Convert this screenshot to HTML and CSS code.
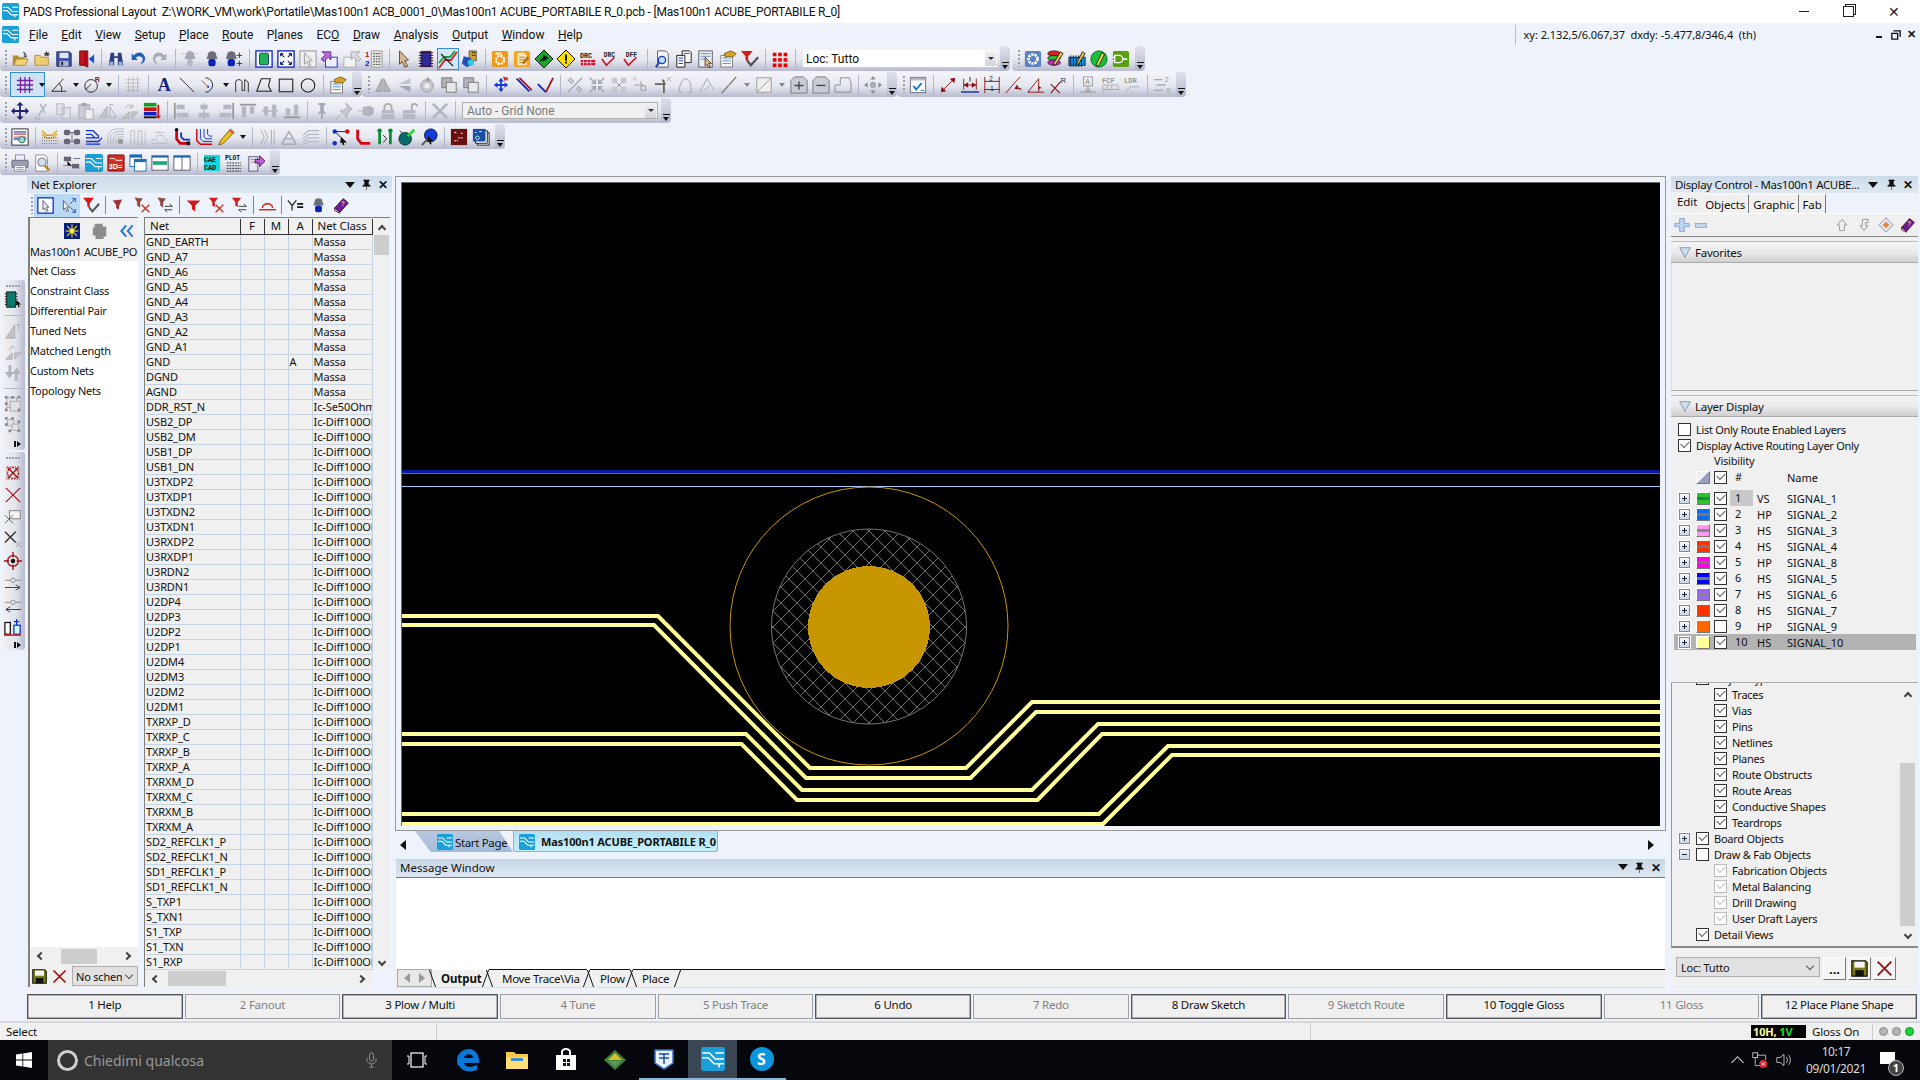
FILE: index.html
```html
<!DOCTYPE html>
<html lang="it">
<head>
<meta charset="utf-8">
<title>PADS Professional Layout</title>
<link rel="stylesheet" href="styles.css">
</head>
<body>
<svg class="sprite" xmlns="http://www.w3.org/2000/svg">
<symbol id="pads" viewBox="0 0 20 20"><rect width="20" height="20" rx="2" fill="#1a9fd8"/><path d="M1 5h6l5 5h7M1 9h5l5 5h8M12 5h7M15 14v3" stroke="#fff" stroke-width="1.3" fill="none"/></symbol>
<symbol id="open" viewBox="0 0 20 20"><path d="M2 6h6l1 2h6v3H6l-3 6H2z" fill="#b88f2c"/><path d="M6 10h13l-3 7H3z" fill="#f2d078" stroke="#9a7a2a" stroke-width=".8"/><path d="M13 2q4 0 4 5l2-1-3 3-3-3 2 1q0-3-2-5" fill="#555"/></symbol>
<symbol id="fnew" viewBox="0 0 20 20"><path d="M2 6h6l1 2h8v9H2z" fill="#f0cd72" stroke="#9a7a2a" stroke-width=".8"/><path d="M15 1l1 2 2-1-1 2 2 1-2 1 0 1-2-1-2 1 0-2-1-1 2-1z" fill="#444"/></symbol>
<symbol id="save" viewBox="0 0 20 20"><path d="M2 2h14l2 2v14H2z" fill="#3a4f9e" stroke="#222a66"/><rect x="5" y="3" width="10" height="6" fill="#dfe4f5"/><rect x="5" y="12" width="10" height="6" fill="#a9b3c8"/><rect x="7" y="13" width="2" height="4" fill="#223"/></symbol>
<symbol id="exit" viewBox="0 0 20 20"><path d="M3 1h9v18l-5-2H3z" fill="#c8121e" stroke="#5c0a10"/><path d="M9 2v15" stroke="#601" /><path d="M13 10l6-5v3h0v4l-0 3z" fill="#1a4fd0"/></symbol>
<symbol id="binoc" viewBox="0 0 20 20"><path d="M4 3h4v4h4V3h4l2 14h-6V9H8v8H2z" fill="#2b3f7c"/><path d="M3 13h4v4H3zM13 13h4v4h-4z" fill="#9bb6e6"/></symbol>
<symbol id="undo" viewBox="0 0 20 20"><path d="M3 4v7h7L7.5 8.5Q12 5 15 9q1 4-3 7 6-1 6-7-2-7-8-6-3 0-4.500 3z" fill="#2460b8"/></symbol>
<symbol id="redo" viewBox="0 0 20 20"><path d="M17 4v7h-7l2.500-2.500Q8 5 5 9q-1 4 3 7-6-1-6-7 2-7 8-6 3 0 4.500 3z" fill="#a9acb5"/></symbol>
<symbol id="lampg" viewBox="0 0 20 20"><path d="M6 3q4-3 8 0l2 7H4z" fill="#a5a8b2"/><rect x="7" y="10" width="6" height="8" rx="2" fill="#b5b8c2"/><path d="M1 4h3M16 4h3M10 0v2" stroke="#b5b8c2"/></symbol>
<symbol id="lamp" viewBox="0 0 20 20"><path d="M6 3q4-3 8 0l2 7H4z" fill="#6d6f78"/><rect x="6" y="10" width="8" height="8" rx="2.500" fill="#0b22b8"/></symbol>
<symbol id="lampp" viewBox="0 0 20 20"><path d="M3 3q4-3 8 0l2 7H1z" fill="#6d6f78"/><rect x="3" y="10" width="8" height="8" rx="2.500" fill="#0b22b8"/><path d="M16 3v6M13 6h6M16 12v6M13 15h6" stroke="#333"/></symbol>
<symbol id="gbox" viewBox="0 0 20 20"><rect x="1" y="1" width="18" height="18" fill="#fff" stroke="#1128c8" stroke-width="1.500"/><rect x="5" y="3.500" width="10" height="13" rx="1.500" fill="#1fb45a" stroke="#137"/></symbol>
<symbol id="zext" viewBox="0 0 20 20"><rect x="1" y="1" width="18" height="18" fill="#fff" stroke="#1128c8" stroke-width="1.500"/><path d="M4 4l4 4M16 4l-4 4M4 16l4-4M16 16l-4-4M4 4h3M4 4v3M16 4h-3M16 4v3M4 16h3M4 16v-3M16 16h-3M16 16v-3" stroke="#111c66" stroke-width="1.300"/></symbol>
<symbol id="curbox" viewBox="0 0 20 20"><rect x="1" y="1" width="18" height="18" fill="#f0f0f0" stroke="#a9acb5" stroke-width="1.500"/><path d="M6 3l9 9-4 0 2 5-2 1-2-5-3 3z" fill="#e7e7ea" stroke="#999"/></symbol>
<symbol id="parrow" viewBox="0 0 20 20"><rect x="5" y="8" width="13" height="11" fill="#eef" stroke="#1128c8"/><path d="M1 2h10v9l-3-3-5 5-3-3 5-5z" fill="#b56ad8" stroke="#6a2a98"/></symbol>
<symbol id="garrow" viewBox="0 0 20 20"><rect x="1" y="8" width="13" height="11" fill="#f2f2f2" stroke="#aaa"/><path d="M19 2H9v9l3-3 5 5 3-3-5-5z" fill="#d8dadf" stroke="#a8a8b0"/></symbol>
<symbol id="list12" viewBox="0 0 20 20"><text x="0" y="8" font-family="Liberation Sans" font-size="9" font-weight="700" fill="#d01010">1</text><text x="0" y="18" font-family="Liberation Sans" font-size="9" font-weight="700" fill="#1020c0">2</text><rect x="7" y="1" width="12" height="18" fill="#e8e8e8" stroke="#999"/><path d="M9 4h8M9 7h8M9 10h8M9 13h8M9 16h8" stroke="#333" stroke-dasharray="2 1"/></symbol>
<symbol id="cursor" viewBox="0 0 20 20"><path d="M5 1l10 10-4 1 3 6-3 1-3-6-3 3z" fill="#d8b890" stroke="#5a4030"/></symbol>
<symbol id="chip" viewBox="0 0 20 20"><rect x="4" y="1" width="12" height="18" fill="#2a2f8c"/><path d="M2 3h16M2 6h16M2 9h16M2 12h16M2 15h16M2 18h16" stroke="#400" stroke-width="1"/><rect x="6" y="3" width="8" height="14" fill="#2e2a9a"/></symbol>
<symbol id="route" viewBox="0 0 20 20"><path d="M1 19L7 11h6l6-8" stroke="#d02020" stroke-width="1.800" fill="none"/><path d="M1 14l5-6h6l5-6" stroke="#10a040" stroke-width="1.800" fill="none"/><path d="M3 5l12 12" stroke="#222" stroke-width="1.200"/></symbol>
<symbol id="threed" viewBox="0 0 20 20"><path d="M9 1h8v11H9z" fill="#d6a328" stroke="#555"/><path d="M3 7l8 2 3 7-8 3-5-4z" fill="#2450b8"/><circle cx="11" cy="14" r="3.500" fill="#38c8e0"/><path d="M12 3h4M12 6h4" stroke="#222"/></symbol>
<symbol id="ocog" viewBox="0 0 20 20"><rect x="1" y="1" width="18" height="18" rx="2" fill="#f09a1a"/><circle cx="10" cy="11" r="4.500" fill="none" stroke="#fff" stroke-width="2.500" stroke-dasharray="2.500 1"/><path d="M5 3h7v2H5z" fill="#fff"/></symbol>
<symbol id="odoc" viewBox="0 0 20 20"><rect x="1" y="1" width="18" height="18" rx="2" fill="#f2a424"/><path d="M5 3h7l3 3v11H5z" fill="#fde9bf"/><path d="M7 8h6M7 11h6M7 14h4" stroke="#a56b10"/><path d="M10 14l6-7 2 2-6 7z" fill="#b56a10"/></symbol>
<symbol id="gdia" viewBox="0 0 20 20"><path d="M10 0l10 10-10 10L0 10z" fill="#18a82c" stroke="#000"/><path d="M5 12l4-4V5l6 4-6 4v-3l-2 3z" fill="#111"/></symbol>
<symbol id="ydia" viewBox="0 0 20 20"><path d="M10 0l10 10-10 10L0 10z" fill="#ffe100" stroke="#000"/><rect x="9" y="5" width="2" height="7" fill="#000"/><rect x="9" y="13" width="2" height="2" fill="#000"/></symbol>
<symbol id="drc" viewBox="0 0 20 20"><text x="1" y="9" font-family="Liberation Mono" font-size="7.500" font-weight="700" fill="#222">DRC</text><path d="M2 11h16v6H2z" fill="#d01030"/><path d="M2 14h16M5 11v6M9 11v6M13 11v6" stroke="#fff" stroke-width=".7"/></symbol>
<symbol id="drcc" viewBox="0 0 20 20"><text x="3" y="8" font-family="Liberation Mono" font-size="7" font-weight="700" fill="#222">DRC</text><path d="M1 10l5 7 9-9" stroke="#d01020" stroke-width="1.800" fill="none"/></symbol>
<symbol id="dff" viewBox="0 0 20 20"><text x="3" y="8" font-family="Liberation Mono" font-size="7" font-weight="700" fill="#222">DFF</text><path d="M1 10l5 7 9-9" stroke="#d01020" stroke-width="1.800" fill="none"/></symbol>
<symbol id="docmag" viewBox="0 0 20 20"><path d="M5 1h9l3 3v15H5z" fill="#f6f6f6" stroke="#556"/><circle cx="10" cy="11" r="4" fill="#bfe0ff" stroke="#1840b0" stroke-width="1.500"/><path d="M7 14l-4 5" stroke="#1840b0" stroke-width="2"/></symbol>
<symbol id="docs" viewBox="0 0 20 20"><path d="M8 1h8l2 2v11h-10z" fill="#fff" stroke="#111"/><path d="M2 6h9v13H2z" fill="#fff" stroke="#111"/><path d="M4 9h5M4 12h5M4 15h5M10 4h6" stroke="#1030c8"/></symbol>
<symbol id="doccur" viewBox="0 0 20 20"><rect x="2" y="1" width="15" height="18" fill="#eee" stroke="#556"/><path d="M4 4h11M4 7h11M4 10h6" stroke="#5a8ac8"/><path d="M9 8l7 7-3 0 2 4-2 1-2-4-2 2z" fill="#d8b890" stroke="#5a4030"/></symbol>
<symbol id="clip" viewBox="0 0 20 20"><path d="M2 6h13v13H2z" fill="#f5f5f5" stroke="#777"/><path d="M4 9h9M4 12h9M4 15h9" stroke="#5a8ac8"/><path d="M6 4l7-3 6 3-4 4-4-1-4 1z" fill="#d6a328" stroke="#7a5b10"/></symbol>
<symbol id="funnel" viewBox="0 0 20 20"><path d="M0 1h13L8 7v6L5 11V7z" fill="#d81818"/><path d="M7 12l4 5 8-9" stroke="#555" stroke-width="2.500" fill="none"/></symbol>
<symbol id="dots" viewBox="0 0 20 20"><g fill="#f00000"><rect x="2" y="3" width="4" height="4"/><rect x="8" y="3" width="4" height="4"/><rect x="14" y="3" width="4" height="4"/><rect x="2" y="9" width="4" height="4"/><rect x="8" y="9" width="4" height="4"/><rect x="14" y="9" width="4" height="4"/><rect x="2" y="15" width="4" height="4"/><rect x="8" y="15" width="4" height="4"/><rect x="14" y="15" width="4" height="4"/></g></symbol>
<symbol id="bgear" viewBox="0 0 20 20"><rect x="1" y="1" width="18" height="18" rx="2" fill="#5d82c0"/><circle cx="10" cy="10" r="5" fill="none" stroke="#fff" stroke-width="3" stroke-dasharray="2.500 1"/></symbol>
<symbol id="stack" viewBox="0 0 20 20"><ellipse cx="9" cy="4" rx="7" ry="3" fill="#e02020" stroke="#222"/><ellipse cx="9" cy="9" rx="7" ry="3" fill="#28b838" stroke="#222"/><ellipse cx="9" cy="14" rx="7" ry="3" fill="#d020d0" stroke="#222"/><path d="M16 2l3 2-8 12-3 1 1-3z" fill="#e8c838" stroke="#222"/></symbol>
<symbol id="chipc" viewBox="0 0 20 20"><rect x="1" y="8" width="18" height="9" fill="#1090e0" stroke="#124"/><path d="M3 6v13M6 6v13M9 6v13M12 6v13M15 6v13" stroke="#124"/><path d="M10 14l6-12 3 2-7 11-3 1z" fill="#e8c838" stroke="#222"/></symbol>
<symbol id="gpen" viewBox="0 0 20 20"><circle cx="10" cy="10" r="9" fill="#1cc038" stroke="#063"/><path d="M7 16l6-13 3 2-6 12-3 1z" fill="#e8d838" stroke="#222"/></symbol>
<symbol id="logic" viewBox="0 0 20 20"><rect x="1" y="1" width="18" height="18" rx="2" fill="#5a9e12"/><path d="M3 6h5a4 4 0 0 1 0 8H3zM12 10h5M3 8H1M3 12H1" stroke="#fff" stroke-width="1.500" fill="none"/></symbol>
<symbol id="grid" viewBox="0 0 20 20"><path d="M5 1v18M10 1v18M15 1v18M1 5h18M1 10h18M1 15h18" stroke="#7a1f9a" stroke-width="1.400"/></symbol>
<symbol id="angle" viewBox="0 0 20 20"><path d="M2 17h16M2 17L15 3M10 8a9 9 0 0 1 3 9" stroke="#222" fill="none"/></symbol>
<symbol id="dial" viewBox="0 0 20 20"><circle cx="9" cy="11" r="7" fill="none" stroke="#222"/><path d="M3 15l6-6" stroke="#222"/><text x="13" y="7" font-family="Liberation Sans" font-size="8" fill="#a01010" font-weight="700">R</text></symbol>
<symbol id="dotsg" viewBox="0 0 20 20"><path d="M2 4h16M2 8h16M2 12h16M2 16h16M5 1v18M10 1v18M15 1v18" stroke="#999" stroke-width="1" stroke-dasharray="1 1"/></symbol>
<symbol id="bigA" viewBox="0 0 20 20"><text x="2" y="17" font-family="Liberation Serif" font-size="20" font-weight="700" fill="#12217a">A</text></symbol>
<symbol id="line" viewBox="0 0 20 20"><path d="M2 2l16 16" stroke="#222"/></symbol>
<symbol id="arc" viewBox="0 0 20 20"><path d="M6 2a8 8 0 0 1 0 16" stroke="#222" fill="none"/><path d="M2 5l7 7" stroke="#d02020"/><circle cx="9" cy="12" r="1.200" fill="#1030c0"/></symbol>
<symbol id="sshape" viewBox="0 0 20 20"><path d="M3 18V6a4 4 0 0 1 7 0v10h3V4l4 3v11" stroke="#222" fill="none"/></symbol>
<symbol id="pgon" viewBox="0 0 20 20"><path d="M2 17L7 3h10l-2 8 3 6z" stroke="#222" fill="none" stroke-width="1.200"/></symbol>
<symbol id="rect" viewBox="0 0 20 20"><rect x="2.500" y="3.500" width="15" height="14" fill="none" stroke="#222" stroke-width="1.200"/></symbol>
<symbol id="circ" viewBox="0 0 20 20"><circle cx="10" cy="10.500" r="7.500" fill="none" stroke="#222" stroke-width="1.200"/></symbol>
<symbol id="mirg" viewBox="0 0 20 20"><path d="M9 3L2 17h7zM11 3l7 14h-7z" fill="#b5b8c2" stroke="#999"/></symbol>
<symbol id="trig" viewBox="0 0 20 20"><path d="M16 2L3 9l13 0z" fill="#c5c8d0"/><path d="M16 18L3 11l13 0z" fill="#a5a8b2"/></symbol>
<symbol id="rotg" viewBox="0 0 20 20"><circle cx="10" cy="11" r="7" fill="#c5c8d0" stroke="#999"/><circle cx="10" cy="11" r="3" fill="#eee"/><path d="M10 1l4 3-4 3z" fill="#999"/></symbol>
<symbol id="sqg" viewBox="0 0 20 20"><rect x="2" y="2" width="11" height="11" fill="#b0b3bb" stroke="#777"/><rect x="7" y="7" width="11" height="11" fill="#e7e8ec" stroke="#777"/></symbol>
<symbol id="moveb" viewBox="0 0 20 20"><path d="M10 2l3 4h-2v3h3V7l4 3-4 3v-2h-3v3h2l-3 4-3-4h2v-3H6v2l-4-3 4-3v2h3V6H7z" fill="#1838d8"/><path d="M13 1l4 2-3 2zM17 1v4" stroke="#d02020" fill="#d02020"/></symbol>
<symbol id="lred" viewBox="0 0 20 20"><path d="M3 3l14 14" stroke="#1020c0" stroke-width="2"/><path d="M6 2l14 14" stroke="#a01020" stroke-width="2"/></symbol>
<symbol id="lblue" viewBox="0 0 20 20"><path d="M2 9l9 9" stroke="#1020c0" stroke-width="2"/><path d="M11 18L19 2" stroke="#a01020" stroke-width="2"/></symbol>
<symbol id="xgray" viewBox="0 0 20 20"><path d="M2 18L18 2M4 2l5 5M2 4l5 5M16 18l-5-5M18 16l-5-5" stroke="#a5a8b2" stroke-width="1.600"/></symbol>
<symbol id="xg2" viewBox="0 0 20 20"><path d="M2 2l6 6M18 2l-6 6M2 18l6-6M18 18l-6-6M8 4v4H4M12 4v4h4M8 16v-4H4M12 16v-4h4" stroke="#a5a8b2" stroke-width="1.800" fill="none"/></symbol>
<symbol id="xg3" viewBox="0 0 20 20"><path d="M2 2h6v6H2zM12 2h6v6h-6zM2 12h6v6H2zM12 12h6v6h-6z" fill="#c5c8d0"/><path d="M8 8l4 4M12 8l-4 4" stroke="#888"/></symbol>
<symbol id="pinx" viewBox="0 0 20 20"><path d="M2 10h8M10 10h3M10 6v10M10 16h5v-5h-5" stroke="#999" fill="none"/><path d="M1 1l4 4M5 1L1 5" stroke="#bbb"/></symbol>
<symbol id="tee" viewBox="0 0 20 20"><path d="M1 9h12M9 5h2M11 5v14" stroke="#666" stroke-width="2"/><path d="M14 1l5 5M19 1l-5 5" stroke="#aaa"/></symbol>
<symbol id="curve" viewBox="0 0 20 20"><path d="M3 18Q5 3 11 3t6 15M3 18h4M13 18h4" stroke="#a0a3ad" fill="none"/></symbol>
<symbol id="wedge" viewBox="0 0 20 20"><path d="M2 18L10 3l8 13" stroke="#a0a3ad" fill="none"/><path d="M7 16l6-5" stroke="#a0a3ad"/></symbol>
<symbol id="slash" viewBox="0 0 20 20"><path d="M2 19L18 1" stroke="#777" stroke-width="1.500"/><circle cx="10" cy="10" r="1.500" fill="#aaa"/></symbol>
<symbol id="boxd" viewBox="0 0 20 20"><rect x="2" y="2" width="16" height="16" fill="#eee" stroke="#999"/><path d="M2 18L18 2" stroke="#999"/></symbol>
<symbol id="plus" viewBox="0 0 20 20"><path d="M5 1h10l4 4v14H1V5z" fill="#c9ccd4" stroke="#777"/><path d="M10 6v9M5 10.500h10" stroke="#444" stroke-width="1.500"/></symbol>
<symbol id="minus" viewBox="0 0 20 20"><path d="M5 1h10l4 4v14H1V5z" fill="#c9ccd4" stroke="#777"/><path d="M5 10.500h10" stroke="#444" stroke-width="1.500"/></symbol>
<symbol id="notch" viewBox="0 0 20 20"><path d="M1 18V10h6V2h10l2 6v10z" fill="none" stroke="#888"/></symbol>
<symbol id="pan" viewBox="0 0 20 20"><path d="M10 0l3 4H7zM10 20l-3-4h6zM0 10l4-3v6zM20 10l-4 3V7z" fill="#8a8d96"/><circle cx="10" cy="10" r="3.500" fill="#aaadb6"/></symbol>
<symbol id="chk" viewBox="0 0 20 20"><rect x="1.500" y="1.500" width="17" height="17" fill="#fff" stroke="#667"/><rect x="2" y="2" width="16" height="3" fill="#b5b8c5"/><path d="M5 11l3 4 6-7" stroke="#1878c0" stroke-width="2" fill="none"/><path d="M13 16h4" stroke="#1878c0"/></symbol>
<symbol id="d1" viewBox="0 0 20 20"><path d="M3 17L17 3" stroke="#8a1010"/><path d="M2 18l1-6 5 5zM18 2l-6 1 5 5z" fill="#8a1010"/></symbol>
<symbol id="d2" viewBox="0 0 20 20"><path d="M3 3v12M17 3v12M3 10h14" stroke="#8a1010"/><path d="M3 10l5-3v6zM17 10l-5-3v6z" fill="#8a1010"/><rect x="0" y="17" width="20" height="1.500" fill="#1020a0"/><path d="M10 1v5" stroke="#222"/></symbol>
<symbol id="d3" viewBox="0 0 20 20"><path d="M2 1v18M18 1v18M2 6h16M2 15h16" stroke="#8a1010"/><text x="7" y="6" font-family="Liberation Sans" font-size="7" fill="#222">2</text><text x="8" y="17" font-family="Liberation Sans" font-size="7" fill="#222">1</text></symbol>
<symbol id="d4" viewBox="0 0 20 20"><path d="M1 19L12 6M17 1l-5 5M12 10l6 6M13 14h5" stroke="#8a1010"/><path d="M10 14l4-4v5z" fill="#8a1010"/></symbol>
<symbol id="d5" viewBox="0 0 20 20"><path d="M1 18h18M1 18L13 3v15" stroke="#8a1010" fill="none"/><path d="M13 11l3 2-3 2z" fill="#8a1010"/></symbol>
<symbol id="d6" viewBox="0 0 20 20"><path d="M2 19L13 6M2 9l10 10" stroke="#8a1010" stroke-width="1.200" fill="none"/><text x="13" y="8" font-family="Liberation Sans" font-size="8" fill="#222">R</text></symbol>
<symbol id="pina" viewBox="0 0 20 20"><rect x="5" y="1" width="10" height="10" fill="none" stroke="#999"/><text x="7" y="9" font-family="Liberation Sans" font-size="8" fill="#888">A</text><path d="M10 11v5M1 18h18" stroke="#999"/><path d="M5 18l5-5 5 5z" fill="#aaa"/></symbol>
<symbol id="fcf" viewBox="0 0 20 20"><text x="1" y="8" font-family="Liberation Mono" font-size="8" fill="#999" font-weight="700">FCF</text><rect x="2" y="10" width="17" height="5" fill="none" stroke="#aaa"/><path d="M7 10v5M12 10v5M4 15l-2 4" stroke="#aaa"/></symbol>
<symbol id="ldr" viewBox="0 0 20 20"><text x="1" y="8" font-family="Liberation Mono" font-size="8" fill="#999" font-weight="700">LDR</text><path d="M2 18l6-6h10" stroke="#aaa" fill="none"/></symbol>
<symbol id="lev" viewBox="0 0 20 20"><path d="M1 4h10M4 10h10M1 16h10" stroke="#aaa" stroke-width="1.500"/><text x="13" y="7" font-family="Liberation Sans" font-size="8" fill="#999">2</text><text x="15" y="19" font-family="Liberation Sans" font-size="8" fill="#999">0</text></symbol>
<symbol id="move4" viewBox="0 0 20 20"><path d="M10 0l4 4h-3v5h5V6l4 4-4 4v-3h-5v5h3l-4 4-4-4h3v-5H4v3l-4-4 4-4v3h5V4H6z" fill="#22236e"/></symbol>
<symbol id="scis" viewBox="0 0 20 20"><path d="M15 2L6 15M8 2l5 10M4 16a2 2 0 1 0 3 1" stroke="#b5b8c2" stroke-width="2" fill="none"/></symbol>
<symbol id="copy" viewBox="0 0 20 20"><path d="M2 2h8v12H2zM8 6h9v12H8z" fill="#e0e1e7" stroke="#b0b3bb"/></symbol>
<symbol id="paste" viewBox="0 0 20 20"><rect x="2" y="3" width="12" height="15" fill="#c9ccd4" stroke="#aaa"/><rect x="5" y="1" width="6" height="4" fill="#aaa"/><rect x="9" y="8" width="9" height="11" fill="#eee" stroke="#aaa"/></symbol>
<symbol id="mirr" viewBox="0 0 20 20"><path d="M9 5L1 17h8z" fill="#c5c8d0" stroke="#aaa"/><path d="M12 17V5l7 12zM11 3h5" stroke="#aaa" fill="none"/></symbol>
<symbol id="flip" viewBox="0 0 20 20"><path d="M2 18l7-7v7zM12 11h7l-7 7z" fill="#c5c8d0" stroke="#aaa"/><path d="M5 7a4 4 0 0 1 6-3l-1 3 4-2-2-3" stroke="#aaa" fill="none"/></symbol>
<symbol id="rlist" viewBox="0 0 20 20"><rect x="1" y="1" width="14" height="4" fill="#12a020"/><rect x="1" y="6" width="14" height="4" fill="#d01010"/><rect x="1" y="11" width="14" height="4" fill="#1020c0"/><rect x="1" y="16" width="14" height="2" fill="#111"/><path d="M17 3v13" stroke="#d01010" stroke-width="2"/><path d="M14 15h6l-3 4z" fill="#d01010"/></symbol>
<symbol id="al1" viewBox="0 0 20 20"><path d="M2 1v18" stroke="#999" stroke-width="2"/><rect x="4" y="3" width="9" height="5" fill="#b5b8c2"/><rect x="4" y="12" width="13" height="5" fill="#b5b8c2"/></symbol>
<symbol id="al2" viewBox="0 0 20 20"><path d="M10 1v18" stroke="#999"/><rect x="6" y="3" width="8" height="5" fill="#b5b8c2"/><rect x="4" y="12" width="12" height="5" fill="#b5b8c2"/></symbol>
<symbol id="al3" viewBox="0 0 20 20"><path d="M18 1v18" stroke="#999" stroke-width="2"/><rect x="7" y="3" width="9" height="5" fill="#b5b8c2"/><rect x="3" y="12" width="13" height="5" fill="#b5b8c2"/></symbol>
<symbol id="al4" viewBox="0 0 20 20"><path d="M1 3h18" stroke="#999" stroke-width="2"/><rect x="3" y="5" width="5" height="12" fill="#b5b8c2"/><rect x="12" y="5" width="5" height="8" fill="#b5b8c2"/></symbol>
<symbol id="al5" viewBox="0 0 20 20"><path d="M1 10h18" stroke="#999"/><rect x="3" y="5" width="5" height="10" fill="#b5b8c2"/><rect x="12" y="3" width="5" height="14" fill="#b5b8c2"/></symbol>
<symbol id="al6" viewBox="0 0 20 20"><path d="M1 17h18" stroke="#999" stroke-width="2"/><rect x="3" y="7" width="5" height="8" fill="#b5b8c2"/><rect x="12" y="3" width="5" height="12" fill="#b5b8c2"/></symbol>
<symbol id="pin1" viewBox="0 0 20 20"><path d="M6 1h8v2l-2 1v6l3 3H5l3-3V4L6 3z" fill="#a5a8b2"/><path d="M10 13v6" stroke="#999" stroke-width="1.500"/></symbol>
<symbol id="pin2" viewBox="0 0 20 20"><path d="M12 1l7 7-2 1-3 4-1 4-7-7 4-1 4-3z" fill="#c5c8d0" stroke="#aaa"/><path d="M6 14l-5 5" stroke="#aaa"/></symbol>
<symbol id="pin3" viewBox="0 0 20 20"><path d="M1 10h6M14 5v10l4-2v-6zM7 6l7-1v10l-7-1z" fill="#b5b8c2" stroke="#aaa"/></symbol>
<symbol id="lock" viewBox="0 0 20 20"><path d="M6 9V6a4 4 0 0 1 8 0v3" fill="none" stroke="#aaa" stroke-width="2"/><rect x="3" y="9" width="14" height="10" fill="#b5b8c2"/><path d="M3 13h14" stroke="#ddd"/></symbol>
<symbol id="unlock" viewBox="0 0 20 20"><path d="M12 9V5a3 3 0 0 1 6 0" fill="none" stroke="#aaa" stroke-width="2"/><rect x="2" y="9" width="14" height="10" fill="#b5b8c2"/><path d="M2 13h14" stroke="#ddd"/></symbol>
<symbol id="xbig" viewBox="0 0 20 20"><path d="M2 2l16 16M18 2L2 18" stroke="#b5b8c2" stroke-width="3"/></symbol>
<symbol id="report" viewBox="0 0 20 20"><rect x="1" y="1" width="18" height="18" fill="#fff" stroke="#222"/><path d="M3 4h14M3 7h14M3 10h14M3 13h14" stroke="#d04040"/><path d="M3 5.500h14M3 11.500h14" stroke="#3050c0"/><circle cx="12" cy="13" r="3.500" fill="#9fd0e8" stroke="#1a7a30"/></symbol>
<symbol id="tracks" viewBox="0 0 20 20"><path d="M1 3l5 5h7l5-5M1 7l5 4h7l5-4" stroke="#e0a010" fill="none" stroke-width="1.500"/><path d="M1 14h18M1 17h18M1 11h18" stroke="#555" stroke-dasharray="1 1.500" fill="none"/></symbol>
<symbol id="nodes" viewBox="0 0 20 20"><rect x="1" y="2" width="7" height="6" rx="2" fill="#667"/><rect x="1" y="12" width="7" height="6" rx="2" fill="#667"/><rect x="12" y="2" width="7" height="6" rx="2" fill="#667"/><rect x="12" y="12" width="7" height="6" rx="2" fill="#667"/><path d="M8 5h4M8 15h4M10 5v10" stroke="#667"/></symbol>
<symbol id="waves" viewBox="0 0 20 20"><path d="M1 3h8l6 6v2H1M1 7h6l4 4M1 15h14l4-4M1 18h16" stroke="#1030d0" fill="none" stroke-width="1.400"/></symbol>
<symbol id="fan" viewBox="0 0 20 20"><path d="M1 18V11a10 10 0 0 1 10-10h8M4 18v-6a8 8 0 0 1 8-8h7M7 18v-5a6 6 0 0 1 6-6h6M10 18v-4a4 4 0 0 1 4-4h5" stroke="#b0b3bb" fill="none"/><circle cx="15" cy="15" r="3" fill="#999"/></symbol>
<symbol id="mean" viewBox="0 0 20 20"><path d="M2 18V3h4v15h4V3h4v15h4V3" stroke="#aaa" stroke-dasharray="2 1" fill="none"/></symbol>
<symbol id="hump" viewBox="0 0 20 20"><path d="M1 13h4l3-5h5l3 5h3M1 17h18M5 5h10" stroke="#aaa" fill="none" stroke-dasharray="2 1"/></symbol>
<symbol id="rcorn" viewBox="0 0 20 20"><path d="M4 1v11l4 5h11" stroke="#d00010" stroke-width="3" fill="none"/><path d="M9 5v5l3 3h7" stroke="#1030c0" stroke-width="2" fill="none"/><circle cx="4" cy="2" r="2" fill="#111"/><rect x="15" y="15" width="4" height="4" fill="#111"/></symbol>
<symbol id="bcorn" viewBox="0 0 20 20"><path d="M2 1v13l4 4h13" stroke="#d00010" stroke-width="1.600" fill="none"/><path d="M6 1v11l3 3h10M10 1v9l2 2h7M14 1v6l2 2h3" stroke="#1030c0" fill="none"/></symbol>
<symbol id="pencil" viewBox="0 0 20 20"><path d="M15 1l4 4-12 12-5 2 2-5z" fill="#f0c020" stroke="#7a5b10"/><path d="M15 1l4 4-2 2-4-4z" fill="#e06060"/></symbol>
<symbol id="tr1" viewBox="0 0 20 20"><path d="M3 2l4 8-4 8M7 2l4 8-4 8M15 2v16M18 2v16" stroke="#aaa" fill="none"/></symbol>
<symbol id="tr2" viewBox="0 0 20 20"><path d="M2 18L10 4l8 14M2 18h16M6 12h8" stroke="#a5a8b2" stroke-width="1.500" fill="none"/></symbol>
<symbol id="tr3" viewBox="0 0 20 20"><path d="M1 8l6-5h12M1 12l6-5h12M1 16l6-5h12M1 19l6-4h12" stroke="#b5b8c2" stroke-width="1.300" fill="none"/></symbol>
<symbol id="net1" viewBox="0 0 20 20"><path d="M3 4h14M3 4l13 12M3 16l0 0" stroke="#111"/><circle cx="3" cy="4" r="2.500" fill="#1030d0"/><circle cx="17" cy="4" r="2.500" fill="#d01010"/><circle cx="3" cy="17" r="2.500" fill="#1030d0"/><path d="M10 10l6 6-3 0 1 3-2 0-1-3-2 1z" fill="#111"/></symbol>
<symbol id="net2" viewBox="0 0 20 20"><path d="M4 2v10l4 5h10" stroke="#e00010" stroke-width="3" fill="none"/></symbol>
<symbol id="net3" viewBox="0 0 20 20"><path d="M4 5v13M16 5v13" stroke="#0a8a30" stroke-width="3"/><circle cx="4" cy="3" r="2.500" fill="#0a8a30"/><circle cx="16" cy="3" r="2.500" fill="#0a8a30"/><path d="M8 8l4 4-4 4" stroke="#111" fill="none"/></symbol>
<symbol id="net4" viewBox="0 0 20 20"><circle cx="8" cy="12" r="7" fill="#0a6a6a" stroke="#033"/><path d="M11 9l7-7" stroke="#30d030" stroke-width="3"/><path d="M2 3l3 3" stroke="#222"/></symbol>
<symbol id="net5" viewBox="0 0 20 20"><circle cx="12" cy="8" r="7" fill="#1438e0" stroke="#023"/><path d="M8 13L2 19" stroke="#555" stroke-width="2"/><path d="M9 9l6 6-3 0 1 3-2 0-1-3-2 1z" fill="#111"/></symbol>
<symbol id="reddot" viewBox="0 0 20 20"><rect x="1" y="1" width="18" height="18" fill="#6a1010"/><path d="M5 5h2M12 6h2M9 11h5M5 14h4" stroke="#f0d0d0" stroke-width="1.500" stroke-dasharray="2 1"/></symbol>
<symbol id="bluedot" viewBox="0 0 20 20"><path d="M6 5h13v14H6z" fill="#fff" stroke="#111"/><path d="M4 3h13v14H4z" fill="#fff" stroke="#111"/><rect x="1" y="1" width="14" height="14" fill="#1a4fa8"/><path d="M3 5h2M8 4h3M6 9a2 2 0 1 0 .1 0" stroke="#dfe" fill="none"/></symbol>
<symbol id="print" viewBox="0 0 20 20"><rect x="5" y="1" width="10" height="7" fill="#eef" stroke="#889"/><rect x="1" y="7" width="18" height="8" rx="1" fill="#9aa0b0" stroke="#667"/><rect x="4" y="13" width="12" height="6" fill="#fff" stroke="#889"/><path d="M6 15h8M6 17h8" stroke="#88b"/></symbol>
<symbol id="prev" viewBox="0 0 20 20"><path d="M3 1h10l3 3v15H3z" fill="#fff" stroke="#889"/><circle cx="10" cy="9" r="4.500" fill="#d0e0f0" stroke="#667"/><path d="M13 13l5 5" stroke="#b08020" stroke-width="2.500"/></symbol>
<symbol id="bgre" viewBox="0 0 20 20"><rect x="1" y="3" width="8" height="5" fill="#667"/><rect x="10" y="11" width="8" height="5" fill="#667"/><path d="M5 8v5h5M0 13h4" stroke="#667"/><path d="M12 5h7" stroke="#667"/></symbol>
<symbol id="r3d" viewBox="0 0 20 20"><rect x="1" y="1" width="18" height="18" rx="1" fill="#d03020" stroke="#701"/><path d="M3 5h5l2 2h7" stroke="#fff" fill="none"/><text x="2" y="17" font-family="Liberation Sans" font-size="8" font-weight="700" fill="#fff">3D=</text></symbol>
<symbol id="win1" viewBox="0 0 20 20"><rect x="1" y="1" width="13" height="13" fill="#fff" stroke="#1a6ab8"/><rect x="1" y="1" width="13" height="3" fill="#1a6ab8"/><rect x="6" y="6" width="13" height="13" fill="#fff" stroke="#1a6ab8"/><rect x="6" y="6" width="13" height="3" fill="#1a6ab8"/></symbol>
<symbol id="win2" viewBox="0 0 20 20"><rect x="1" y="2" width="18" height="16" fill="#fff" stroke="#556"/><rect x="1" y="2" width="18" height="2" fill="#1a6ab8"/><rect x="2" y="8" width="16" height="4" fill="#1aa87a"/></symbol>
<symbol id="win3" viewBox="0 0 20 20"><rect x="1" y="2" width="18" height="16" fill="#fff" stroke="#556"/><rect x="1" y="2" width="18" height="2" fill="#1a6ab8"/><path d="M10 2v16" stroke="#556"/></symbol>
<symbol id="cae" viewBox="0 0 20 20"><rect x="1" y="1" width="18" height="18" fill="#18d8e8"/><text x="1" y="9" font-family="Liberation Mono" font-size="7.500" font-weight="700" fill="#111">CAE</text><text x="1" y="18" font-family="Liberation Mono" font-size="7.500" font-weight="700" fill="#111">CAD</text></symbol>
<symbol id="plot" viewBox="0 0 20 20"><text x="0" y="7" font-family="Liberation Mono" font-size="7" font-weight="700" fill="#111">PLOT</text><path d="M2 10h16M2 13h16M2 16h16M2 19h16" stroke="#222" stroke-dasharray="2 1"/></symbol>
<symbol id="exp" viewBox="0 0 20 20"><rect x="2" y="3" width="10" height="16" fill="#e8e8f0" stroke="#557"/><path d="M4 6h6M4 9h6" stroke="#88a"/><path d="M9 6h5V2l6 6-6 6v-4H9z" fill="#b060d8" stroke="#704"/></symbol>
<symbol id="sel1" viewBox="0 0 20 20"><rect x="1" y="1" width="18" height="18" fill="#fff" stroke="#1128c8" stroke-width="1.500"/><path d="M7 4l7 8-3 0 2 4-2 1-2-4-2 2z" fill="#e8e8e8" stroke="#556"/></symbol>
<symbol id="sel2" viewBox="0 0 20 20"><path d="M4 4l7 8-3 0 2 4-2 1-2-4-2 2z" fill="#e8e8e8" stroke="#556"/><path d="M12 8l6-6M12 12l6 6M14 2h4v4M14 18h4v-4" stroke="#1840b8" fill="none"/></symbol>
<symbol id="fil2" viewBox="0 0 20 20"><path d="M2 4l11-1-3 6-1 6-3-2 0-4z" fill="#a03030"/></symbol>
<symbol id="fil3" viewBox="0 0 20 20"><path d="M1 1l9 1-3 4 0 6-3-2 0-4z" fill="#a04030" stroke="#555" stroke-width=".5"/><path d="M9 9l9 9M18 9l-9 9" stroke="#d03020" stroke-width="1.600"/></symbol>
<symbol id="fil4" viewBox="0 0 20 20"><path d="M1 1l9 1-3 4 0 6-3-2 0-4z" fill="#a04030" stroke="#555" stroke-width=".5"/><path d="M9 11h9l-3-3M18 15H9l3 3" stroke="#222" fill="none"/></symbol>
<symbol id="fil5" viewBox="0 0 20 20"><path d="M2 4h16l-6 6v7l-4-3v-4z" fill="#d01818"/></symbol>
<symbol id="fil6" viewBox="0 0 20 20"><path d="M1 1l11 0-4 5 0 6-3-2 0-4z" fill="#d02020"/><path d="M9 9l9 9M18 9l-9 9" stroke="#d03020" stroke-width="1.600"/></symbol>
<symbol id="fil7" viewBox="0 0 20 20"><path d="M1 1l11 0-4 5 0 6-3-2 0-4z" fill="#d02020"/><path d="M9 11h9l-3-3M18 15H9l3 3" stroke="#222" fill="none"/></symbol>
<symbol id="loop" viewBox="0 0 20 20"><path d="M4 13a6 5 0 1 1 12 0" stroke="#c82010" stroke-width="1.600" fill="none"/><path d="M0 15h20" stroke="#c82010" stroke-width="1.600"/></symbol>
<symbol id="yeq" viewBox="0 0 20 20"><path d="M1 4l5 6v6M11 4l-5 6" stroke="#333" fill="none" stroke-width="1.600"/><path d="M12 8h7M12 12h7" stroke="#111" stroke-width="2"/></symbol>
<symbol id="book" viewBox="0 0 20 20"><path d="M2 13L12 2l6 5-10 11z" fill="#6e1a9a" stroke="#301"/><path d="M2 13v3l6 3 0-1z" fill="#fff" stroke="#301"/><text x="9" y="11" font-family="Liberation Sans" font-size="8" font-weight="700" fill="#f0d020">?</text></symbol>
<symbol id="star" viewBox="0 0 20 20"><rect width="20" height="20" fill="#0a2080"/><path d="M10 2v16M2 10h16M4 4l12 12M16 4L4 16" stroke="#ffe830" stroke-width="1.300"/><circle cx="10" cy="10" r="3" fill="#ffe830"/></symbol>
<symbol id="blob" viewBox="0 0 20 20"><path d="M4 2h9v3h4v11h-3v3H5v-4H2V6h2z" fill="#8c8c8c"/></symbol>
<symbol id="dleft" viewBox="0 0 20 20"><path d="M9 3L3 10l6 7M17 3l-6 7 6 7" stroke="#2f78d8" stroke-width="2.600" fill="none"/></symbol>
<symbol id="floppy" viewBox="0 0 20 20"><path d="M1 1h16l2 2v16H1z" fill="#7a7a10" stroke="#111" stroke-width="1.400"/><rect x="4" y="2" width="12" height="7" fill="#f4f4f4"/><rect x="5" y="12" width="10" height="7" fill="#111"/></symbol>
<symbol id="xred" viewBox="0 0 20 20"><path d="M2 2l16 16M18 2L2 18" stroke="#a01010" stroke-width="2.200"/></symbol>
<symbol id="pin" viewBox="0 0 12 12"><path d="M3 1h6v1l-1 1v3l2 1v1H2V7l2-1V3L3 2zM6 8v4" fill="#111" stroke="#111" stroke-width=".6"/></symbol>
<symbol id="rchip" viewBox="0 0 20 20"><rect x="3" y="1" width="10" height="17" fill="#0a7a70" stroke="#111"/><path d="M1 3h2M1 6h2M1 9h2M1 12h2M1 15h2M13 3h2M13 6h2M13 9h2M13 12h2M13 15h2" stroke="#111"/><path d="M14 10l5 5-2.500 0 1 3-1.500 0-1-3-2 1z" fill="#111"/></symbol>
<symbol id="vx1" viewBox="0 0 20 20"><path d="M4 4l12 12M16 4L4 16" stroke="#9a1010" stroke-width="1.500"/><circle cx="10" cy="10" r="6" fill="none" stroke="#9a1010" stroke-width="1.300" stroke-dasharray="2 1"/><rect x="3" y="3" width="14" height="14" fill="none" stroke="#9a1010" stroke-dasharray="1 2"/></symbol>
<symbol id="vx2" viewBox="0 0 20 20"><path d="M2 2l16 16M18 2L2 18" stroke="#a01010" stroke-width="1.300"/></symbol>
<symbol id="vx3" viewBox="0 0 20 20"><rect x="6" y="3" width="12" height="9" fill="#f4f4f4" stroke="#777"/><path d="M1 8l9 9M10 8l-9 9" stroke="#555"/></symbol>
<symbol id="vx4" viewBox="0 0 20 20"><path d="M1 2l12 12M13 2L1 14" stroke="#333" stroke-width="1.600"/><path d="M13 13l6 6M19 13l-6 6" stroke="#999"/></symbol>
<symbol id="vx5" viewBox="0 0 20 20"><circle cx="10" cy="10" r="6" fill="none" stroke="#a01010" stroke-width="1.500"/><circle cx="10" cy="10" r="2.500" fill="#111"/><path d="M10 0v6M10 14v6M0 10h6M14 10h6" stroke="#a01010" stroke-width="1.500"/></symbol>
<symbol id="vx6" viewBox="0 0 20 20"><path d="M1 7h6M13 7h6" stroke="#888"/><circle cx="10" cy="7" r="2.500" fill="none" stroke="#888"/><path d="M1 15h16M13 12l5 3-5 3" stroke="#333" fill="none"/></symbol>
<symbol id="vx7" viewBox="0 0 20 20"><path d="M1 7h6M13 7h6" stroke="#888"/><circle cx="10" cy="7" r="2.500" fill="none" stroke="#888"/><path d="M3 15h16M7 12l-5 3 5 3" stroke="#333" fill="none"/></symbol>
<symbol id="vx8" viewBox="0 0 20 20"><rect x="1" y="5" width="6" height="13" fill="#fff" stroke="#111" stroke-width="1.400"/><rect x="11" y="8" width="7" height="10" fill="#cfe" stroke="#1030d0" stroke-width="1.400"/><path d="M0 19h19" stroke="#e01010" stroke-width="1.600"/><path d="M14 1v7M11 4h6" stroke="#1030d0" stroke-width="1.400"/></symbol>
<symbol id="g1" viewBox="0 0 20 20"><path d="M2 18L12 3v15z" fill="#c0c3cb" stroke="#aaa"/><path d="M14 3h4M16 3v6" stroke="#aaa"/></symbol>
<symbol id="g2" viewBox="0 0 20 20"><path d="M2 18l7-7v7zM12 11h7l-7 7z" fill="#c5c8d0" stroke="#aaa"/><path d="M6 8l3-5 3 3" stroke="#aaa" fill="none"/></symbol>
<symbol id="g3" viewBox="0 0 20 20"><path d="M5 1v8H1l5 7 5-7H8V1zM15 19v-8h4l-5-7-5 7h3v8z" fill="#b0b3bb"/></symbol>
<symbol id="g4" viewBox="0 0 20 20"><rect x="3" y="3" width="11" height="11" fill="#e0e1e6" stroke="#aaa"/><rect x="7" y="7" width="11" height="11" fill="#e0e1e6" stroke="#aaa"/><path d="M1 1h3v3H1zM8 1h3v3H8zM15 1h3v3h-3zM1 8h3v3H1zM1 15h3v3H1zM15 15h3v3h-3z" fill="#888"/></symbol>
<symbol id="g5" viewBox="0 0 20 20"><rect x="4" y="4" width="7" height="7" fill="#e0e1e6" stroke="#aaa"/><rect x="9" y="9" width="7" height="7" fill="#e0e1e6" stroke="#aaa"/><path d="M1 1h3v3H1zM8 1h3v3H8zM15 5h3v3h-3zM1 8h3v3H1zM5 15h3v3H5zM15 15h3v3h-3z" fill="#888"/></symbol>
<symbol id="up" viewBox="0 0 20 20"><path d="M10 3l6 7h-3v7H7v-7H4z" fill="none" stroke="#888"/></symbol>
<symbol id="dn" viewBox="0 0 20 20"><path d="M8 3v8H5l5 6 5-6h-3V7h3V3z" fill="none" stroke="#888"/></symbol>
<symbol id="odia" viewBox="0 0 20 20"><path d="M10 1l9 9-9 9-9-9z" fill="#e0e4ee" stroke="#88a"/><path d="M10 6l4 4-4 4-4-4z" fill="#f08030"/></symbol>
<symbol id="plusb" viewBox="0 0 20 20"><path d="M7 2h6v6h6v4h-6v6H7v-6H1V8h6z" fill="#bcd3ef" stroke="#7a9ac8"/></symbol>
<symbol id="minb" viewBox="0 0 20 20"><rect x="3" y="8" width="14" height="5" fill="#c5d5ea" stroke="#8aa"/></symbol>
<symbol id="down3" viewBox="0 0 20 20"><path d="M1 2h18L10 18z" fill="#c9e0f8" stroke="#667"/></symbol>
<symbol id="winlogo" viewBox="0 0 20 20"><path d="M0 3l8-1v7.500H0zM9 1.900L20 0v9.500H9zM0 10.500h8V18l-8-1zM9 10.500h11V20L9 18.100z" fill="#fff"/></symbol>
<symbol id="edge" viewBox="0 0 24 24"><path d="M1 13C1 6 6 1 13 1c6 0 10 5 10 12v2H8c.5 4 7 5 13 2v5c-8 3-16 1-18-5-1 2-1 2-2-4zM8 10h9c0-5-8-5-9 0z" fill="#0a78d8"/></symbol>
<symbol id="folder" viewBox="0 0 24 24"><path d="M1 4h8l2 2h12v15H1z" fill="#f7c948"/><path d="M1 9h22v12H1z" fill="#ffde75"/><rect x="6" y="10" width="12" height="3" fill="#3a8fd0"/></symbol>
<symbol id="store" viewBox="0 0 24 24"><path d="M2 7h20v15H2z" fill="#fff"/><path d="M8 7V4a4 3 0 0 1 8 0v3" fill="none" stroke="#fff" stroke-width="2"/><path d="M9 11h3v3H9zM13 11h3v3h-3zM9 15h3v3H9zM13 15h3v3h-3z" fill="#111"/></symbol>
<symbol id="appd" viewBox="0 0 24 24"><path d="M12 2l11 10-11 10L1 12z" fill="#3f7f3a"/><path d="M12 5l7 7H5z" fill="#d8c030"/><path d="M6 13h12l-6 6z" fill="#5a9a5a"/></symbol>
<symbol id="apps" viewBox="0 0 24 24"><path d="M3 3h18v13l-9 6-9-6z" fill="#e8f2fc" stroke="#3070c0" stroke-width="1.500"/><path d="M7 7h10M7 11h10M12 7v10" stroke="#1a50a8" stroke-width="1.500"/></symbol>
<symbol id="mic" viewBox="0 0 20 24"><rect x="7" y="1" width="6" height="13" rx="3" fill="none" stroke="#9a9a9a" stroke-width="1.300"/><path d="M3 9v3a7 6 0 0 0 14 0V9M10 18v5M6 23h8" fill="none" stroke="#9a9a9a" stroke-width="1.300"/></symbol>
<symbol id="taskv" viewBox="0 0 24 20"><rect x="6" y="3" width="12" height="14" fill="none" stroke="#fff" stroke-width="1.200"/><path d="M2 6h2v8H2M22 6h-2v8h2" fill="none" stroke="#fff"/></symbol>
<symbol id="netx" viewBox="0 0 20 20"><rect x="1" y="1" width="6" height="6" fill="none" stroke="#ddd"/><path d="M4 7v10h6M7 4h10v6" stroke="#ddd" fill="none"/><circle cx="14" cy="15" r="5" fill="#e02030"/><path d="M12 13l4 4M16 13l-4 4" stroke="#fff" stroke-width="1.200"/></symbol>
<symbol id="vol" viewBox="0 0 20 20"><path d="M1 7h4l5-4v14l-5-4H1z" fill="none" stroke="#ddd"/><path d="M13 6q3 4 0 8M16 4q4 6 0 12" fill="none" stroke="#ddd"/></symbol>
</svg>

<div class="app">
  <header class="titlebar">
    <svg class="ti"><use href="#pads"/></svg>
    <span class="title">PADS Professional Layout&nbsp; Z:\WORK_VM\work\Portatile\Mas100n1 ACB_0001_0\Mas100n1 ACUBE_PORTABILE R_0.pcb - [Mas100n1 ACUBE_PORTABILE R_0]</span>
    <span class="wbtns"><i class="wmin"></i><i class="wres"></i><i class="wclose">✕</i></span>
  </header>
  <nav class="menubar">
    <svg class="mi"><use href="#pads"/></svg>
    <a><u>F</u>ile</a><a><u>E</u>dit</a><a><u>V</u>iew</a><a><u>S</u>etup</a><a><u>P</u>lace</a><a><u>R</u>oute</a><a>P<u>l</u>anes</a><a>EC<u>O</u></a><a><u>D</u>raw</a><a><u>A</u>nalysis</a><a><u>O</u>utput</a><a><u>W</u>indow</a><a><u>H</u>elp</a>
    <span class="coords">xy: 2.132,5/6.067,37&nbsp; dxdy: -5.477,8/346,4&nbsp; (th)</span>
    <span class="mdi"><i class="mmin"></i><svg class="mres" viewBox="0 0 12 12"><path d="M3 1h8v7M1 4h7v7H1z" fill="none" stroke="#111" stroke-width="1.600"/></svg><b>✕</b></span>
  </nav>

  <section class="toolbars">
    <div class="row">
      <div class="tb"><i class="grip"></i>
        <svg class="t"><use href="#open"/></svg><svg class="t"><use href="#fnew"/></svg><svg class="t"><use href="#save"/></svg><svg class="t"><use href="#exit"/></svg><i class="sep"></i>
        <svg class="t"><use href="#binoc"/></svg><svg class="t"><use href="#undo"/></svg><svg class="t"><use href="#redo"/></svg><i class="sep"></i>
        <svg class="t"><use href="#lampg"/></svg><svg class="t"><use href="#lamp"/></svg><svg class="t"><use href="#lampp"/></svg><i class="sep"></i>
        <svg class="t"><use href="#gbox"/></svg><svg class="t"><use href="#zext"/></svg><svg class="t"><use href="#curbox"/></svg><svg class="t"><use href="#parrow"/></svg><svg class="t"><use href="#garrow"/></svg><svg class="t"><use href="#list12"/></svg><i class="sep"></i>
        <svg class="t"><use href="#cursor"/></svg><svg class="t"><use href="#chip"/></svg><svg class="t on"><use href="#route"/></svg><svg class="t"><use href="#threed"/></svg><i class="sep"></i>
        <svg class="t"><use href="#ocog"/></svg><svg class="t"><use href="#odoc"/></svg><svg class="t"><use href="#gdia"/></svg><svg class="t"><use href="#ydia"/></svg><svg class="t"><use href="#drc"/></svg><svg class="t"><use href="#drcc"/></svg><svg class="t"><use href="#dff"/></svg><i class="sep"></i>
        <svg class="t"><use href="#docmag"/></svg><svg class="t"><use href="#docs"/></svg><svg class="t"><use href="#doccur"/></svg><svg class="t"><use href="#clip"/></svg><svg class="t"><use href="#funnel"/></svg><i class="sep"></i>
        <svg class="t"><use href="#dots"/></svg><i class="sep"></i>
        <div class="combo white"><span>Loc: Tutto</span><i class="dd"></i></div>
      </div><i class="cap"></i>
      <div class="tb sub gap2"><i class="grip"></i>
        <svg class="t"><use href="#bgear"/></svg><svg class="t"><use href="#stack"/></svg><svg class="t"><use href="#chipc"/></svg><svg class="t"><use href="#gpen"/></svg><svg class="t"><use href="#logic"/></svg>
      </div><i class="cap"></i>
    </div>

    <div class="row">
      <div class="tb"><i class="grip short"></i>
        <div class="gridbtn"><svg class="t"><use href="#grid"/></svg><i class="ar"></i></div>
        <svg class="t"><use href="#angle"/></svg><i class="ar slot"></i><svg class="t"><use href="#dial"/></svg><i class="ar slot"></i><i class="sep"></i>
        <svg class="t"><use href="#dotsg"/></svg><i class="sep"></i>
        <svg class="t ml2"><use href="#bigA"/></svg><svg class="t"><use href="#line"/></svg><svg class="t"><use href="#arc"/></svg><i class="ar slot"></i><svg class="t"><use href="#sshape"/></svg><svg class="t"><use href="#pgon"/></svg><svg class="t"><use href="#rect"/></svg><svg class="t"><use href="#circ"/></svg><i class="sep"></i>
        <svg class="t"><use href="#clip"/></svg>
      </div><i class="cap"></i>
      <div class="tb sub"><i class="grip"></i>
        <svg class="t"><use href="#mirg"/></svg><svg class="t"><use href="#trig"/></svg><svg class="t"><use href="#rotg"/></svg><svg class="t"><use href="#sqg"/></svg><svg class="t"><use href="#sqg"/></svg><i class="sep"></i>
        <svg class="t"><use href="#moveb"/></svg><svg class="t"><use href="#lred"/></svg><svg class="t"><use href="#lblue"/></svg><i class="sep"></i>
        <svg class="t"><use href="#xgray"/></svg><svg class="t"><use href="#xg2"/></svg><svg class="t"><use href="#xg3"/></svg><svg class="t"><use href="#pinx"/></svg><svg class="t"><use href="#tee"/></svg><svg class="t"><use href="#curve"/></svg><svg class="t"><use href="#wedge"/></svg><svg class="t"><use href="#slash"/></svg><i class="ar slot wide gray"></i><svg class="t"><use href="#boxd"/></svg><i class="ar slot wide gray"></i><svg class="t"><use href="#plus"/></svg><svg class="t"><use href="#minus"/></svg><svg class="t"><use href="#notch"/></svg><i class="sep"></i>
        <svg class="t"><use href="#pan"/></svg>
      </div><i class="cap"></i>
      <div class="tb sub"><i class="grip"></i>
        <svg class="t"><use href="#chk"/></svg><i class="sep"></i>
        <svg class="t"><use href="#d1"/></svg><svg class="t"><use href="#d2"/></svg><svg class="t"><use href="#d3"/></svg><svg class="t"><use href="#d4"/></svg><svg class="t"><use href="#d5"/></svg><svg class="t"><use href="#d6"/></svg><i class="sep"></i>
        <svg class="t"><use href="#pina"/></svg><svg class="t"><use href="#fcf"/></svg><svg class="t"><use href="#ldr"/></svg><i class="sep"></i>
        <svg class="t"><use href="#lev"/></svg>
      </div><i class="cap"></i>
    </div>

    <div class="row">
      <div class="tb"><i class="grip"></i>
        <svg class="t"><use href="#move4"/></svg><svg class="t"><use href="#scis"/></svg><svg class="t"><use href="#copy"/></svg><svg class="t"><use href="#paste"/></svg><svg class="t"><use href="#mirr"/></svg><svg class="t"><use href="#flip"/></svg><svg class="t"><use href="#rlist"/></svg><i class="sep"></i>
        <svg class="t"><use href="#al1"/></svg><svg class="t"><use href="#al2"/></svg><svg class="t"><use href="#al3"/></svg><svg class="t"><use href="#al4"/></svg><svg class="t"><use href="#al5"/></svg><svg class="t"><use href="#al6"/></svg><i class="sep"></i>
        <svg class="t"><use href="#pin1"/></svg><svg class="t"><use href="#pin2"/></svg><svg class="t"><use href="#pin3"/></svg><svg class="t"><use href="#lock"/></svg><svg class="t"><use href="#unlock"/></svg><i class="sep"></i>
        <svg class="t"><use href="#xbig"/></svg><i class="sep"></i>
        <div class="combo grey"><span>Auto - Grid None</span><i class="dd"></i></div>
      </div><i class="cap"></i>
    </div>

    <div class="row">
      <div class="tb"><i class="grip"></i>
        <svg class="t"><use href="#report"/></svg><i class="sep"></i>
        <svg class="t"><use href="#tracks"/></svg><svg class="t"><use href="#nodes"/></svg><svg class="t"><use href="#waves"/></svg><svg class="t"><use href="#fan"/></svg><svg class="t"><use href="#mean"/></svg><svg class="t"><use href="#hump"/></svg><svg class="t"><use href="#rcorn"/></svg><svg class="t"><use href="#bcorn"/></svg><svg class="t"><use href="#pencil"/></svg><i class="ar slot"></i><i class="sep"></i>
        <svg class="t"><use href="#tr1"/></svg><svg class="t"><use href="#tr2"/></svg><svg class="t"><use href="#tr3"/></svg><i class="sep"></i>
        <svg class="t"><use href="#net1"/></svg><svg class="t"><use href="#net2"/></svg><svg class="t"><use href="#net3"/></svg><svg class="t"><use href="#net4"/></svg><svg class="t"><use href="#net5"/></svg><i class="sep"></i>
        <svg class="t"><use href="#reddot"/></svg><svg class="t"><use href="#bluedot"/></svg>
      </div><i class="cap"></i>
    </div>

    <div class="row">
      <div class="tb"><i class="grip"></i>
        <svg class="t"><use href="#print"/></svg><svg class="t"><use href="#prev"/></svg><i class="sep"></i>
        <svg class="t"><use href="#bgre"/></svg><svg class="t"><use href="#pads"/></svg><svg class="t"><use href="#r3d"/></svg><svg class="t"><use href="#win1"/></svg><svg class="t"><use href="#win2"/></svg><svg class="t"><use href="#win3"/></svg><i class="sep"></i>
        <svg class="t"><use href="#cae"/></svg><svg class="t"><use href="#plot"/></svg><svg class="t"><use href="#exp"/></svg>
      </div><i class="cap"></i>
    </div>
  </section>

  <main class="workspace">
    <aside class="rail">
      <div class="railg one">
        <i class="vgrip"></i>
        <svg class="t"><use href="#rchip"/></svg><i class="rsep"></i>
        <svg class="t"><use href="#g1"/></svg><svg class="t"><use href="#g2"/></svg><svg class="t"><use href="#g3"/></svg><i class="rsep"></i>
        <svg class="t"><use href="#g4"/></svg><svg class="t"><use href="#g5"/></svg>
        <i class="rarrow"></i>
      </div>
      <div class="railg two">
        <i class="vgrip"></i>
        <svg class="t"><use href="#vx1"/></svg><svg class="t"><use href="#vx2"/></svg><svg class="t"><use href="#vx3"/></svg><svg class="t"><use href="#vx4"/></svg><svg class="t"><use href="#vx5"/></svg><svg class="t"><use href="#vx6"/></svg><svg class="t"><use href="#vx7"/></svg><svg class="t"><use href="#vx8"/></svg>
        <i class="rarrow"></i>
      </div>
    </aside>

    <section class="netpanel">
      <div class="phead"><span>Net Explorer</span><span class="pbtns"><i class="tridown"></i><svg class="pinic"><use href="#pin"/></svg><b>✕</b></span></div>
      <div class="ptools">
        <i class="grip"></i>
        <svg class="pt onb"><use href="#sel1"/></svg><svg class="pt onb"><use href="#sel2"/></svg><svg class="pt"><use href="#funnel"/></svg><i class="psep"></i>
        <svg class="pt"><use href="#fil2"/></svg><svg class="pt"><use href="#fil3"/></svg><svg class="pt"><use href="#fil4"/></svg><i class="psep"></i>
        <svg class="pt"><use href="#fil5"/></svg><svg class="pt"><use href="#fil6"/></svg><svg class="pt"><use href="#fil7"/></svg><i class="psep"></i>
        <svg class="pt"><use href="#loop"/></svg><i class="psep"></i>
        <svg class="pt"><use href="#yeq"/></svg><svg class="pt"><use href="#lamp"/></svg><svg class="pt"><use href="#book"/></svg>
      </div>
      <div class="pbody">
        <div class="tree">
          <div class="treetop">
            <div class="treeicons"><svg class="sm"><use href="#star"/></svg><svg class="sm"><use href="#blob"/></svg><svg class="sm dbl"><use href="#dleft"/></svg></div>
            <div class="treeroot">Mas100n1 ACUBE_PORTABILE R_0</div>
          </div>
          <ul class="treelist"><li>Net Class</li><li>Constraint Class</li><li>Differential Pair</li><li>Tuned Nets</li><li>Matched Length</li><li>Custom Nets</li><li>Topology Nets</li></ul>
          <div class="hscroll tree-h"><i class="sl"></i><i class="thumb th1"></i><i class="sr"></i></div>
          <div class="scheme"><svg class="sm"><use href="#floppy"/></svg><svg class="sm"><use href="#xred"/></svg><div class="minicombo"><span class="mct">No schematic</span><i class="chev"></i></div></div>
        </div>
        <div class="netwrap">
          <div class="nettable">
            <table class="nets">
              <colgroup><col class="c1"><col class="c2"><col class="c2"><col class="c2"><col class="c5"></colgroup>
              <thead><tr><th class="thn">Net</th><th>F</th><th>M</th><th>A</th><th class="thn">Net Class</th></tr></thead>
              <tbody>
<tr><td>GND_EARTH</td><td></td><td></td><td></td><td>Massa</td></tr>
<tr><td>GND_A7</td><td></td><td></td><td></td><td>Massa</td></tr>
<tr><td>GND_A6</td><td></td><td></td><td></td><td>Massa</td></tr>
<tr><td>GND_A5</td><td></td><td></td><td></td><td>Massa</td></tr>
<tr><td>GND_A4</td><td></td><td></td><td></td><td>Massa</td></tr>
<tr><td>GND_A3</td><td></td><td></td><td></td><td>Massa</td></tr>
<tr><td>GND_A2</td><td></td><td></td><td></td><td>Massa</td></tr>
<tr><td>GND_A1</td><td></td><td></td><td></td><td>Massa</td></tr>
<tr><td>GND</td><td></td><td></td><td>A</td><td>Massa</td></tr>
<tr><td>DGND</td><td></td><td></td><td></td><td>Massa</td></tr>
<tr><td>AGND</td><td></td><td></td><td></td><td>Massa</td></tr>
<tr><td>DDR_RST_N</td><td></td><td></td><td></td><td>Ic-Se50Ohm</td></tr>
<tr><td>USB2_DP</td><td></td><td></td><td></td><td>Ic-Diff100Ohm</td></tr>
<tr><td>USB2_DM</td><td></td><td></td><td></td><td>Ic-Diff100Ohm</td></tr>
<tr><td>USB1_DP</td><td></td><td></td><td></td><td>Ic-Diff100Ohm</td></tr>
<tr><td>USB1_DN</td><td></td><td></td><td></td><td>Ic-Diff100Ohm</td></tr>
<tr><td>U3TXDP2</td><td></td><td></td><td></td><td>Ic-Diff100Ohm</td></tr>
<tr><td>U3TXDP1</td><td></td><td></td><td></td><td>Ic-Diff100Ohm</td></tr>
<tr><td>U3TXDN2</td><td></td><td></td><td></td><td>Ic-Diff100Ohm</td></tr>
<tr><td>U3TXDN1</td><td></td><td></td><td></td><td>Ic-Diff100Ohm</td></tr>
<tr><td>U3RXDP2</td><td></td><td></td><td></td><td>Ic-Diff100Ohm</td></tr>
<tr><td>U3RXDP1</td><td></td><td></td><td></td><td>Ic-Diff100Ohm</td></tr>
<tr><td>U3RDN2</td><td></td><td></td><td></td><td>Ic-Diff100Ohm</td></tr>
<tr><td>U3RDN1</td><td></td><td></td><td></td><td>Ic-Diff100Ohm</td></tr>
<tr><td>U2DP4</td><td></td><td></td><td></td><td>Ic-Diff100Ohm</td></tr>
<tr><td>U2DP3</td><td></td><td></td><td></td><td>Ic-Diff100Ohm</td></tr>
<tr><td>U2DP2</td><td></td><td></td><td></td><td>Ic-Diff100Ohm</td></tr>
<tr><td>U2DP1</td><td></td><td></td><td></td><td>Ic-Diff100Ohm</td></tr>
<tr><td>U2DM4</td><td></td><td></td><td></td><td>Ic-Diff100Ohm</td></tr>
<tr><td>U2DM3</td><td></td><td></td><td></td><td>Ic-Diff100Ohm</td></tr>
<tr><td>U2DM2</td><td></td><td></td><td></td><td>Ic-Diff100Ohm</td></tr>
<tr><td>U2DM1</td><td></td><td></td><td></td><td>Ic-Diff100Ohm</td></tr>
<tr><td>TXRXP_D</td><td></td><td></td><td></td><td>Ic-Diff100Ohm</td></tr>
<tr><td>TXRXP_C</td><td></td><td></td><td></td><td>Ic-Diff100Ohm</td></tr>
<tr><td>TXRXP_B</td><td></td><td></td><td></td><td>Ic-Diff100Ohm</td></tr>
<tr><td>TXRXP_A</td><td></td><td></td><td></td><td>Ic-Diff100Ohm</td></tr>
<tr><td>TXRXM_D</td><td></td><td></td><td></td><td>Ic-Diff100Ohm</td></tr>
<tr><td>TXRXM_C</td><td></td><td></td><td></td><td>Ic-Diff100Ohm</td></tr>
<tr><td>TXRXM_B</td><td></td><td></td><td></td><td>Ic-Diff100Ohm</td></tr>
<tr><td>TXRXM_A</td><td></td><td></td><td></td><td>Ic-Diff100Ohm</td></tr>
<tr><td>SD2_REFCLK1_P</td><td></td><td></td><td></td><td>Ic-Diff100Ohm</td></tr>
<tr><td>SD2_REFCLK1_N</td><td></td><td></td><td></td><td>Ic-Diff100Ohm</td></tr>
<tr><td>SD1_REFCLK1_P</td><td></td><td></td><td></td><td>Ic-Diff100Ohm</td></tr>
<tr><td>SD1_REFCLK1_N</td><td></td><td></td><td></td><td>Ic-Diff100Ohm</td></tr>
<tr><td>S_TXP1</td><td></td><td></td><td></td><td>Ic-Diff100Ohm</td></tr>
<tr><td>S_TXN1</td><td></td><td></td><td></td><td>Ic-Diff100Ohm</td></tr>
<tr><td>S1_TXP</td><td></td><td></td><td></td><td>Ic-Diff100Ohm</td></tr>
<tr><td>S1_TXN</td><td></td><td></td><td></td><td>Ic-Diff100Ohm</td></tr>
<tr><td>S1_RXP</td><td></td><td></td><td></td><td>Ic-Diff100Ohm</td></tr>
              </tbody>
            </table>
            <div class="vscroll"><i class="su"></i><i class="vthumb"></i><i class="sd"></i></div>
          </div>
          <div class="hscroll table-h"><i class="sl"></i><i class="thumb th2"></i><i class="sr"></i></div>
        </div>
      </div>
    </section>

    <section class="center">
      <div class="docframe">
        <svg class="pcb" viewBox="401 182 1259 644" xmlns="http://www.w3.org/2000/svg">
          <defs>
            <pattern id="hatch" x="869" y="627" width="16" height="16" patternUnits="userSpaceOnUse">
              <path d="M0 0L16 16M16 0L0 16" stroke="#6e6e6e" stroke-width="1.100" fill="none" shape-rendering="crispEdges"/>
            </pattern>
          </defs>
          <rect x="401" y="182" width="1259" height="644" fill="#000"/>
          <path d="M401 182.500H1660M401.500 182V826" stroke="#6e6e6e" stroke-width="1"/>
          <rect x="402" y="470" width="1258" height="3" fill="#0a1aa0"/>
          <rect x="402" y="473" width="1258" height="1" fill="#2a6cff"/>
          <rect x="402" y="486" width="1258" height="1" fill="#a6c8ff"/>
          <circle cx="869" cy="626" r="139" fill="none" stroke="#c89600" stroke-width="1"/>
          <circle cx="869" cy="626.500" r="97.500" fill="url(#hatch)" stroke="#757575"/>
          <circle cx="869" cy="627" r="61" fill="#c89600" shape-rendering="crispEdges"/>
          <g fill="none" stroke="#ffff99" stroke-width="4" stroke-linejoin="miter">
            <path d="M402 616H658L810 768H966L1032 702H1660"/>
            <path d="M402 625H654L806 778H970.500L1036 712H1660"/>
            <path d="M402 734H746L802 790H1032L1098 724H1660"/>
            <path d="M402 744H741.500L797 800H1037.500L1102 734H1660"/>
            <path d="M402 814H1099L1168 746H1660"/>
            <path d="M402 824H1103L1172 755H1660"/>
          </g>
        </svg>
      </div>
      <div class="doctabs">
        <span class="tarrow left"></span>
        <div class="dtab start"><svg class="dti"><use href="#pads"/></svg>Start Page</div>
        <div class="dtab active"><svg class="dti"><use href="#pads"/></svg><b>Mas100n1 ACUBE_PORTABILE R_0</b></div>
        <span class="tline"></span>
        <span class="tarrow right"></span>
      </div>
      <div class="msgwin">
        <div class="phead msgh"><span>Message Window</span><span class="pbtns"><i class="tridown"></i><svg class="pinic"><use href="#pin"/></svg><b>✕</b></span></div>
        <div class="msgbody"></div>
        <div class="msgtabs">
          <div class="navs"><i class="nl"></i><i class="nr"></i></div>
          <div class="mt cur">Output</div><div class="mt mv">Move Trace\Via</div><div class="mt pl">Plow</div><div class="mt lst">Place</div>
          <span class="mline"></span>
        </div>
      </div>
    </section>

    <aside class="display">
      <div class="phead dh"><span>Display Control - Mas100n1 ACUBE...</span><span class="pbtns"><i class="tridown"></i><svg class="pinic"><use href="#pin"/></svg><b>✕</b></span></div>
      <div class="dtabs"><span class="dt act">Edit</span><span class="dt">Objects</span><span class="dt">Graphic</span><span class="dt">Fab</span></div>
      <div class="dtools"><svg class="sm"><use href="#plusb"/></svg><svg class="sm tightm"><use href="#minb"/></svg><span class="fill"></span><svg class="sm"><use href="#up"/></svg><svg class="sm"><use href="#dn"/></svg><svg class="sm"><use href="#odia"/></svg><svg class="sm"><use href="#book"/></svg></div>
      <div class="shead first"><svg class="shi"><use href="#down3"/></svg>Favorites</div>
      <div class="favbody"></div>
      <div class="shead"><svg class="shi"><use href="#down3"/></svg>Layer Display</div>
      <div class="layerbody">
        <div class="ck"><i class="cb"></i>List Only Route Enabled Layers</div>
        <div class="ck"><i class="cb on"></i>Display Active Routing Layer Only</div>
        <div class="vis">Visibility</div>
        <div class="lr lhead"><i class="px none"></i><i class="sw swh"></i><i class="cb on"></i><span class="n">#</span><span class="ty"></span><span class="nm">Name</span></div>
        <div class="lr gapped"><i class="px"></i><i class="sw s1"></i><i class="cb on"></i><span class="n act">1</span><span class="ty">VS</span><span class="nm">SIGNAL_1</span></div>
        <div class="lr"><i class="px"></i><i class="sw s2"></i><i class="cb on"></i><span class="n">2</span><span class="ty">HP</span><span class="nm">SIGNAL_2</span></div>
        <div class="lr"><i class="px"></i><i class="sw s3"></i><i class="cb on"></i><span class="n">3</span><span class="ty">HS</span><span class="nm">SIGNAL_3</span></div>
        <div class="lr"><i class="px"></i><i class="sw s4"></i><i class="cb on"></i><span class="n">4</span><span class="ty">HS</span><span class="nm">SIGNAL_4</span></div>
        <div class="lr"><i class="px"></i><i class="sw s5"></i><i class="cb on"></i><span class="n">5</span><span class="ty">HP</span><span class="nm">SIGNAL_8</span></div>
        <div class="lr"><i class="px"></i><i class="sw s6"></i><i class="cb on"></i><span class="n">6</span><span class="ty">HS</span><span class="nm">SIGNAL_5</span></div>
        <div class="lr"><i class="px"></i><i class="sw s7"></i><i class="cb on"></i><span class="n">7</span><span class="ty">HS</span><span class="nm">SIGNAL_6</span></div>
        <div class="lr"><i class="px"></i><i class="sw s8"></i><i class="cb on"></i><span class="n">8</span><span class="ty">HS</span><span class="nm">SIGNAL_7</span></div>
        <div class="lr"><i class="px"></i><i class="sw s9"></i><i class="cb"></i><span class="n">9</span><span class="ty">HP</span><span class="nm">SIGNAL_9</span></div>
        <div class="lr sel"><i class="px"></i><i class="sw s10"></i><i class="cb on"></i><span class="n">10</span><span class="ty">HS</span><span class="nm">SIGNAL_10</span></div>
      </div>
      <div class="objlist">
        <div class="objscroll">
          <div class="ob l1 clipped"><i class="cb on"></i>Object Types</div>
          <div class="ob l2"><i class="cb on"></i>Traces</div>
          <div class="ob l2"><i class="cb on"></i>Vias</div>
          <div class="ob l2"><i class="cb on"></i>Pins</div>
          <div class="ob l2"><i class="cb on"></i>Netlines</div>
          <div class="ob l2"><i class="cb on"></i>Planes</div>
          <div class="ob l2"><i class="cb on"></i>Route Obstructs</div>
          <div class="ob l2"><i class="cb on"></i>Route Areas</div>
          <div class="ob l2"><i class="cb on"></i>Conductive Shapes</div>
          <div class="ob l2"><i class="cb on"></i>Teardrops</div>
          <div class="ob l1"><i class="px"></i><i class="cb on"></i>Board Objects</div>
          <div class="ob l1"><i class="px mn"></i><i class="cb"></i>Draw &amp; Fab Objects</div>
          <div class="ob l2"><i class="cb on dis"></i>Fabrication Objects</div>
          <div class="ob l2"><i class="cb on dis"></i>Metal Balancing</div>
          <div class="ob l2"><i class="cb on dis"></i>Drill Drawing</div>
          <div class="ob l2"><i class="cb on dis"></i>User Draft Layers</div>
          <div class="ob l1 nopx"><i class="cb on"></i>Detail Views</div>
        </div>
        <div class="objbar"><i class="su"></i><i class="objthumb"></i><i class="sd"></i></div>
      </div>
      <div class="dfoot">
        <div class="minicombo big">Loc: Tutto<i class="chev"></i></div>
        <span class="fbtn dotsbtn">...</span><span class="fbtn"><svg class="fi"><use href="#floppy"/></svg></span><span class="fbtn"><svg class="fi"><use href="#xred"/></svg></span>
      </div>
    </aside>
  </main>

  <section class="fkeys">
    <div class="fk">1 Help</div><div class="fk off">2 Fanout</div><div class="fk">3 Plow / Multi</div><div class="fk off">4 Tune</div><div class="fk off">5 Push Trace</div><div class="fk">6 Undo</div><div class="fk off">7 Redo</div><div class="fk">8 Draw Sketch</div><div class="fk off">9 Sketch Route</div><div class="fk">10 Toggle Gloss</div><div class="fk off">11 Gloss</div><div class="fk">12 Place Plane Shape</div>
  </section>

  <footer class="status">
    <span class="st1">Select</span>
    <span class="st2"></span>
    <span class="layerbox"><b class="ly">10H,</b>&nbsp;<b class="gr">1V</b></span>
    <span class="gloss">Gloss On</span>
    <span class="leds"><i></i><i></i><i class="g"></i></span>
  </footer>

  <section class="taskbar">
    <svg class="startlogo"><use href="#winlogo"/></svg>
    <div class="search"><i class="cortana"></i><span>Chiedimi qualcosa</span><svg class="micic"><use href="#mic"/></svg></div>
    <div class="tk"><svg class="tki"><use href="#taskv"/></svg></div>
    <div class="tk mlt"><svg class="tki"><use href="#edge"/></svg></div>
    <div class="tk"><svg class="tki"><use href="#folder"/></svg></div>
    <div class="tk"><svg class="tki"><use href="#store"/></svg></div>
    <div class="tk"><svg class="tki"><use href="#appd"/></svg></div>
    <div class="tk act"><svg class="tki"><use href="#apps"/></svg></div>
    <div class="tk act2"><svg class="tki"><use href="#pads"/></svg></div>
    <div class="tk act"><i class="skype">S</i></div>
    <div class="tray">
      <span class="caret"></span>
      <svg class="tri"><use href="#netx"/></svg>
      <svg class="tri"><use href="#vol"/></svg>
      <div class="clock"><span>10:17</span><span>09/01/2021</span></div>
      <div class="notif"><i class="bub"></i><i class="cnt">1</i></div>
    </div>
  </section>
</div>
</body>
</html>
```
FILE: styles.css
```css
*{box-sizing:border-box}
html,body{margin:0;padding:0;width:1920px;height:1080px;overflow:hidden}
body{font-family:"Noto Sans","Liberation Sans",sans-serif;font-size:12px;color:#111;background:#eef2fb}
i{display:block;font-style:normal}
.sprite{display:none}
.app{width:1920px;height:1080px;display:flex;flex-direction:column}

.titlebar{height:23px;background:#fff;display:flex;align-items:center;flex:none}
.ti{width:17px;height:17px;margin:0 4px 0 2px;flex:none}
.title{font-family:Roboto,"Noto Sans",sans-serif;font-size:12px;white-space:nowrap;flex:none;letter-spacing:-.22px}
.wbtns{margin-left:auto;display:flex;align-items:center;height:23px;padding-right:4px}
.wbtns i{width:45px;display:flex;justify-content:center;align-items:center;height:23px}
.wmin::before{content:"";width:10px;height:1px;background:#222}
.wres::before{content:"";width:9px;height:9px;border:1px solid #222;box-shadow:2px -2px 0 -1px #fff,2px -2px 0 0 #222}
.wclose{font-size:14px;color:#222}

.menubar{height:23px;display:flex;align-items:center;flex:none;padding-left:2px;font-family:Roboto,"Noto Sans",sans-serif}
.mi{width:17px;height:17px;margin-right:10px;flex:none}
.menubar a{margin-right:13.500px;white-space:nowrap;text-decoration:none}
.coords{margin-left:auto;border-left:1px solid #bbb;padding-left:8px;height:20px;line-height:20px;white-space:nowrap;font-size:11px;font-family:"Noto Sans",sans-serif;letter-spacing:-.05px}
.mdi{display:flex;align-items:center;margin-left:120px;gap:6px;padding-right:4px;font-size:11px}
.mmin{width:6px;height:2px;background:#111;margin:5px 3px 0 0}
.mres{width:10px;height:10px}
.mdi b{font-weight:700;font-size:11px}

.toolbars{flex:none;height:130px}
.row{height:26px;display:flex;align-items:flex-start}
.tb{height:25px;display:flex;align-items:center;padding:0 3px 0 3px;background:linear-gradient(#f4f5fa,#e6e8f0 55%,#b8bbce);border-radius:4px 0 0 4px;flex:none}
.tb.sub{padding-left:4px}
.gap2{margin-left:2px}
.cap{width:10px;height:25px;flex:none;background:linear-gradient(#dfe1ec,#b4b7cb);border-radius:0 4px 4px 0;position:relative}
.cap::after{content:"";position:absolute;left:2px;bottom:3px;width:7px;height:5px;border-top:1px solid #111}
.cap::before{content:"";position:absolute;left:2px;bottom:2px;border:3.500px solid transparent;border-top:4px solid #111;border-bottom:0}
.grip{width:6px;height:17px;flex:none;background:repeating-linear-gradient(#9a9daa 0 2px,transparent 2px 4px) no-repeat 2px 0/2px 100%}
.t{width:20px;height:20px;margin:0 1px;padding:1px;flex:none;display:block}
.t.on{background:#d3e5f6;box-shadow:0 0 0 1px #3a8fd0;padding:0}
.ml2{margin-left:3px}
.sep{width:1px;height:20px;margin:0 3.500px;background:#b3b6c4;flex:none}
.ar{width:0;height:0;border:3px solid transparent;border-top:4px solid #111;border-bottom:0;flex:none}
.ar.slot{margin:0 2.500px}
.ar.slot.wide{margin:0 3.500px}
.ar.gray{border-top-color:#888}
.gridbtn{width:35px;height:25px;display:flex;align-items:center;gap:3px;padding-left:4px;background:#cfe2f6;box-shadow:inset 0 0 0 1px #3a8fd0;margin:0 3px 0 1px;flex:none}

.combo{display:flex;align-items:center;justify-content:space-between;flex:none;margin-left:3px;font-family:Roboto,"Noto Sans",sans-serif}
.combo.white{width:194px;height:17px;background:#fff;padding-left:3px;font-size:12px;margin-left:4px}
.combo.grey{width:196px;height:17px;background:#f0f0f0;border:1px solid #b0b0b0;color:#7a7a7a;padding-left:4px;font-size:12px}
.dd{width:11px;height:15px;background:linear-gradient(#f2f2f5,#d2d3da);position:relative;flex:none;margin-right:1px}
.dd::after{content:"";position:absolute;left:2.500px;top:6px;border:3px solid transparent;border-top:3.500px solid #333;border-bottom:0}

.workspace{height:812px;display:flex;flex:none}
.rail{width:27px;padding:104px 0 0 1px;flex:none}
.railg{width:24px;background:linear-gradient(90deg,#f2f3f8,#e2e4ec 60%,#b8bbce);border-radius:3px;display:flex;flex-direction:column;align-items:center}
.railg .t{margin:0}
.railg.one{height:170px;padding-top:3px;margin-bottom:2px;gap:1px}
.railg.two{height:198px;padding-top:3px;gap:2px}
.vgrip{width:14px;height:2px;flex:none;margin:2px 0 2px;background:repeating-linear-gradient(90deg,#9a9daa 0 2px,transparent 2px 3px)}
.rsep{width:18px;height:1px;background:#b3b6c4;margin:4px 0;flex:none}
.rarrow{flex:none;width:22px;height:12px;margin-top:auto;position:relative}
.rarrow::before{content:"";position:absolute;left:12px;top:3px;width:2px;height:6px;background:#111}
.rarrow::after{content:"";position:absolute;left:15px;top:2.500px;border:3.500px solid transparent;border-left:4px solid #111;border-right:0}

.netpanel{width:365px;display:flex;flex-direction:column;flex:none}
.phead{height:17px;display:flex;align-items:center;justify-content:space-between;padding:0 4px;background:linear-gradient(#cddbe9,#dfe8f1);font-size:11.500px;flex:none;white-space:nowrap;letter-spacing:-.2px}
.pbtns{display:flex;align-items:center;gap:6px}
.pbtns b{font-size:12px;font-weight:700}
.tridown{border:5px solid transparent;border-top:6px solid #111;border-bottom:0;width:0;height:0}
.pinic{width:11px;height:11px}
.ptools{height:24px;background:#eef2fb;display:flex;align-items:center;padding-left:2px;flex:none}
.ptools .grip{width:5px}
.pt{width:17px;height:17px;margin:0 3px;flex:none}
.onb{background:#b8d8f4;box-shadow:0 0 0 3px #b8d8f4}
.psep{width:1px;height:18px;background:#888;margin:0 2px;flex:none}
.pbody{flex:1;display:flex;min-height:0;padding-bottom:1px}
.tree{width:110px;margin-left:1px;border:solid #808080;border-width:1px 0 0 2px;background:#f0f0f0;display:flex;flex-direction:column;overflow:hidden;font-size:11px;letter-spacing:-.25px;flex:none}
.treetop{height:43px;flex:none}
.treeicons{height:25px;display:flex;align-items:center}
.sm{width:16px;height:16px;flex:none}
.treeicons .sm:nth-child(1){margin-left:34px}
.treeicons .sm:nth-child(2){margin-left:11px;width:18px;height:18px}
.treeicons .dbl{margin-left:10px;width:16px;height:16px}
.treeroot{white-space:nowrap;overflow:hidden;height:18px;line-height:18px}
.treelist{list-style:none;margin:0;padding:0;background:#fff;flex:1}
.treelist li{height:20px;line-height:20px;white-space:nowrap}
.hscroll{height:18px;display:flex;align-items:center;background:#f0f0f0;flex:none}
.sl,.sr{width:6px;height:6px;border:solid #444;border-width:2px 0 0 2px;transform:rotate(-45deg);flex:none;margin-left:8px}
.sr{transform:rotate(135deg);margin-left:auto;margin-right:8px}
.thumb{background:#cdcdcd;height:15px;flex:none}
.th1{width:36px;margin-left:17px}
.th2{width:58px;margin-left:9px}
.scheme{height:22px;display:flex;align-items:center;gap:5px;padding-left:2px;flex:none}
.scheme .sm{width:15px;height:15px}
.minicombo{flex:1;min-width:0;height:20px;background:#e1e1e1;border:1px solid #adadad;display:flex;align-items:center;justify-content:space-between;white-space:nowrap;overflow:hidden;padding:0 3px;font-size:11px;letter-spacing:-.2px}
.mct{overflow:hidden;flex:1;min-width:0}
.chev{width:6px;height:6px;border:solid #555;border-width:0 1px 1px 0;transform:rotate(45deg);flex:none;margin:-3px 2px 0 4px}
.netwrap{width:246px;margin-left:6px;border-left:1px solid #808080;display:flex;flex-direction:column;flex:none}
.nettable{flex:1;display:flex;border-top:1px solid #808080;background:#f0f0f0;overflow:hidden;min-height:0}
.nets{width:227px;table-layout:fixed;border-collapse:collapse;font-size:11px;background:#f0f0f0;flex:none;margin-top:1px;height:max-content;letter-spacing:-.1px}
.c1{width:95px}.c2{width:24px}.c5{width:60px}
.nets th{height:15px;padding:0;font-weight:400;background:#f0f0f0;border-right:1px solid #333;border-bottom:1px solid #333;font-size:11.500px;line-height:14px}
.nets .thn{text-align:left;padding-left:5px}
.nets td{height:15px;line-height:14px;padding:0 0 0 1px;border-right:1px solid #c5d4e4;border-bottom:1px solid #c5d4e4;white-space:nowrap;overflow:hidden}
.vscroll{width:18px;flex:none;display:flex;flex-direction:column;align-items:center;background:#f0f0f0;height:753px}
.su,.sd{width:6px;height:6px;border:solid #444;border-width:2px 0 0 2px;transform:rotate(45deg);flex:none;margin-top:8px}
.sd{transform:rotate(225deg);margin:auto 0 6px}
.vthumb{width:15px;height:20px;background:#cdcdcd;margin-top:3px;flex:none}
.table-h{height:17px;margin-right:18px}

.center{width:1271px;margin-left:3px;display:flex;flex-direction:column;flex:none}
.docframe{height:655px;border:1px solid #999;padding:5px;flex:none}
.pcb{width:1259px;height:644px;display:block}
.doctabs{height:28px;display:flex;align-items:center;flex:none;padding-left:5px}
.tarrow{width:0;height:0;border:5px solid transparent;flex:none}
.tarrow.left{border-right:6px solid #111;border-left:0}
.tarrow.right{border-left:6px solid #111;border-right:0;margin-right:12px}
.dtab{height:21px;display:flex;align-items:center;font-size:11.500px;white-space:nowrap;flex:none;align-self:flex-start;padding-top:1px}
.start{width:98px;margin-left:9px;padding-left:22px;letter-spacing:-.35px;background:linear-gradient(#b8c8dd,#a4bcdc);clip-path:polygon(0 0,86% 0,100% 100%,16% 100%)}
.active{width:205px;padding-left:5px;background:linear-gradient(#b2dff3,#c6f0f8);border:1px solid #9cb0c4;border-top:0;border-radius:0 0 3px 3px}
.active b{font-weight:700;margin-left:4px;font-size:11px;letter-spacing:-.15px}
.dti{width:16px;height:16px;margin-right:2px;flex:none}
.tline{flex:1;align-self:flex-start;height:1px}
.msgwin{height:129px;display:flex;flex-direction:column;margin:0 1px;flex:none}
.msgh{height:19px;padding-bottom:2px;border-bottom:1px solid #777;background:linear-gradient(#c7d6e6,#dde7f1);letter-spacing:0}
.msgbody{flex:1;background:#fff}
.msgtabs{height:18px;background:#f0f0f0;display:flex;align-items:flex-end;flex:none;border-bottom:1px solid #ddd}
.navs{display:flex;width:35px;margin-left:1px;height:18px;flex:none;background:#e7e7e7;box-shadow:inset 0 0 0 1px #aaa;align-items:center;justify-content:space-around;padding:0 2px}
.nl,.nr{width:0;height:0;border:5px solid transparent}
.nl{border-right:6px solid #999;border-left:0}
.nr{border-left:6px solid #999;border-right:0}
.mt{height:18px;line-height:17px;position:relative;flex:none;font-size:11.500px;border-top:1px solid #111;white-space:nowrap}
.mt::before,.mt::after{content:"";position:absolute;top:0;bottom:0;width:1px;background:#111}
.mt::before{left:0;transform:skewX(20deg)}
.mt::after{right:0;transform:skewX(-20deg)}
.cur{width:54px;padding-left:9px;font-weight:700;border-top-color:transparent;letter-spacing:-.1px}
.mv{width:98px;padding-left:13px;margin-left:3px;letter-spacing:-.3px}
.pl{width:40px;padding-left:10px;margin-left:3px;letter-spacing:-.2px}
.lst{width:45px;padding-left:9px;margin-left:3px;letter-spacing:-.2px}
.mline{flex:1;height:18px;border-top:1px solid #111}

.display{width:247px;margin-left:5px;background:#f0f0f0;display:flex;flex-direction:column;flex:none;font-size:11px}
.dh{font-size:11.500px;padding-right:5px;letter-spacing:-.35px;overflow:hidden}
.dh .tridown{margin-right:2px}
.dtabs{height:21px;background:#eef2fb;display:flex;align-items:flex-end;border-bottom:1px solid #fff;padding:0 0 0 1px;flex:none;letter-spacing:-.1px}
.dt{height:19px;padding:0 3px;border-right:1px solid #777;border-top:1px solid #fff;line-height:19px;font-size:11.500px;background:#f0f0f0;margin-right:1px}
.dt.act{height:21px;border:0;padding:0 5px;line-height:20px;margin-right:0}
.dtools{height:23px;display:flex;align-items:center;padding:0 2px 0 3px;gap:6px;flex:none;border-bottom:1px solid #888;margin-bottom:4px}
.tightm{margin-left:-3px}
.fill{flex:1}
.shead{height:22px;flex:none;display:flex;align-items:center;gap:4px;padding-left:8px;background:linear-gradient(#f4f4f4,#ebebeb 50%,#cfcfcf);border-top:1px solid #bbb;border-bottom:1px solid #aaa;font-size:11.500px;letter-spacing:-.25px}
.shi{width:12px;height:13px;flex:none}
.favbody{height:128px;flex:none;border-bottom:1px solid #aaa;margin-bottom:4px;box-shadow:inset 1px 0 0 #ddd}
.layerbody{height:266px;flex:none;padding-top:4px;border-bottom:1px solid #aaa}
.ck{height:16px;display:flex;align-items:center;gap:5px;padding-left:7px;white-space:nowrap;font-size:11px;letter-spacing:-.3px}
.cb{width:13px;height:13px;border:1px solid #333;background:#fff;position:relative;flex:none}
.cb.on::after{content:"";position:absolute;left:2px;top:1.500px;width:7px;height:4px;border:solid #555;border-width:0 0 1.500px 1.500px;transform:rotate(-45deg)}
.cb.dis{border-color:#bbb}
.cb.dis::after{border-color:#bbb}
.vis{height:16px;line-height:16px;padding-left:43px;font-size:11px;letter-spacing:-.2px}
.lr{height:16px;display:flex;align-items:center;padding-left:8px;font-size:11px}
.gapped{margin-top:5px}
.px{width:11px;height:11px;border:1px solid #7a8aa5;background:linear-gradient(#f5f8fd,#c8d6ea);position:relative;flex:none;box-shadow:0 0 0 1px #fff}
.px::before{content:"";position:absolute;left:2px;right:2px;top:4px;height:1px;background:#223}
.px::after{content:"";position:absolute;top:2px;bottom:2px;left:4px;width:1px;background:#223}
.px.mn::after{display:none}
.px.none{visibility:hidden}
.sw{width:14px;height:13px;margin:0 4px 0 6px;flex:none;border:1px solid;border-color:#fff #777 #777 #fff}
.swh{background:linear-gradient(135deg,#f0f2f8 50%,#9aa0c0 50%)}
.s1{background:linear-gradient(#2fc02f 35%,#1a8a40 35% 65%,#2fc02f 65%)}
.s2{background:linear-gradient(#0a6cf0 35%,#777 35% 65%,#0a6cf0 65%)}
.s3{background:linear-gradient(#ff99ee 35%,#888 35% 65%,#ff99ee 65%)}
.s4{background:linear-gradient(#ff3300 35%,#777 35% 65%,#ff3300 65%)}
.s5{background:linear-gradient(#ff00e0 35%,#777 35% 65%,#ff00e0 65%)}
.s6{background:linear-gradient(#0000ff 35%,#777 35% 65%,#0000ff 65%)}
.s7{background:linear-gradient(#9966ee 35%,#888 35% 65%,#9966ee 65%)}
.s8{background:#ff3300}.s9{background:#ff6600}.s10{background:#ffff99}
.lr .n{width:23px;margin-left:3px;height:16px;line-height:16px;padding-left:5px;flex:none}
.lr .n.act{background:#c8c8c8}
.lr .ty{width:34px;padding-left:4px;flex:none}
.lr.sel{background:#b3b3b3;margin:0 2px 0 3px;padding-left:5px}
.objlist{flex:none;height:265px;border-bottom:2px solid #888;border-left:1px solid #999;display:flex;overflow:hidden}
.objscroll{flex:1;overflow:hidden}
.ob{height:16px;display:flex;align-items:center;gap:5px;white-space:nowrap;font-size:11px;letter-spacing:-.25px}
.ob .px{margin-right:1px}
.ob.l1{padding-left:7px}
.ob.l2{padding-left:42px}
.ob.clipped{margin-top:-13px;padding-left:24px}
.ob.nopx{padding-left:24px}
.objbar{width:17px;margin-right:2px;display:flex;flex-direction:column;align-items:center;flex:none;padding-top:2px}
.objthumb{width:15px;height:163px;background:#cdcdcd;margin-top:64px;flex:none}
.objbar .sd{margin:auto 0 8px}
.dfoot{flex:1;display:flex;align-items:flex-start;padding:9px 0 0 5px;gap:2px}
.minicombo.big{flex:none;width:144px;height:20px;padding:0 4px;margin-right:1px}
.fbtn{width:23px;height:23px;display:flex;align-items:center;justify-content:center;background:#f4f4f4;border:1px solid;border-color:#fff #777 #777 #fff;flex:none}
.dotsbtn{font-weight:700;font-size:13px;line-height:20px;align-items:flex-end}
.fi{width:17px;height:17px}

.fkeys{flex:none;height:25px;margin:6px 3px 0 27px;display:grid;grid-template-columns:repeat(12,1fr);gap:2px}
.fk{border:1px solid #555;background:#f0f0f0;display:flex;align-items:center;justify-content:center;font-size:11.500px;white-space:nowrap;box-shadow:inset 0 0 0 .5px #777;padding-bottom:5px;letter-spacing:-.25px}
.fk.off{border-color:#a0a0a0;color:#808080;box-shadow:none}

.status{flex:none;height:19px;margin-top:2px;background:#f0f0f0;border-top:2px solid #d8d8d8;display:flex;align-items:center;font-size:11.500px;letter-spacing:-.15px}
.st1{width:437px;padding-left:6px;height:100%;border-right:1px solid #ccc;line-height:17px}
.st2{width:874px;height:100%;border-right:1px solid #ccc}
.layerbox{margin-left:440px;width:55px;height:13px;background:#000;line-height:13px;color:#ffff99;font-size:11px;padding-left:2px;white-space:nowrap;display:flex}
.ly{font-weight:700}.gr{color:#22dd22;font-weight:700}
.gloss{margin-left:6px;width:61px;height:100%;border-right:1px solid #ccc;line-height:17px}
.leds{display:flex;gap:4px;margin-left:6px}
.leds i{width:9px;height:9px;border-radius:50%;background:#b5b5b5;border:1px solid #8a8a8a}
.leds .g{background:#18d830;border-color:#0a8a20}

.taskbar{flex:none;height:40px;background:#05070c;display:flex;align-items:center;color:#ddd}
.startlogo{width:16px;height:16px;margin:0 16px;flex:none}
.search{width:344px;height:40px;background:#333;display:flex;align-items:center;padding-left:9px;color:#999;font-size:14px;flex:none}
.cortana{width:21px;height:21px;border:3px solid #cfcfcf;border-radius:50%;margin-right:6px;flex:none}
.micic{width:13px;height:18px;margin-left:auto;margin-right:14px}
.tk{width:49px;height:40px;display:flex;align-items:center;justify-content:center;flex:none}
.mlt{margin-left:2px}
.tki{width:24px;height:24px}
.tk.act{border-bottom:2px solid #8ab4d8}
.tk.act2{background:#3a4654;border-bottom:2px solid #8ab4d8}
.skype{width:24px;height:24px;border-radius:50%;background:#0a96dc;color:#fff;font-weight:700;font-size:16px;line-height:24px;text-align:center}
.tray{margin-left:auto;display:flex;align-items:center;height:40px}
.caret{width:9px;height:9px;border:solid #ddd;border-width:1px 0 0 1px;transform:rotate(45deg);margin:5px 6px 0 0}
.tri{width:16px;height:16px;margin:0 4px}
.clock{display:flex;flex-direction:column;align-items:center;width:76px;font-size:12px;line-height:17px;margin-left:2px;letter-spacing:-.4px}
.notif{width:42px;height:40px;position:relative;margin-left:4px}
.bub{position:absolute;left:2px;top:12px;width:15px;height:12px;background:#fff}
.cnt{position:absolute;left:10px;top:20px;width:16px;height:16px;border-radius:50%;background:#444;border:1px solid #bbb;color:#fff;font-size:11px;line-height:14px;text-align:center;font-weight:700}
```
